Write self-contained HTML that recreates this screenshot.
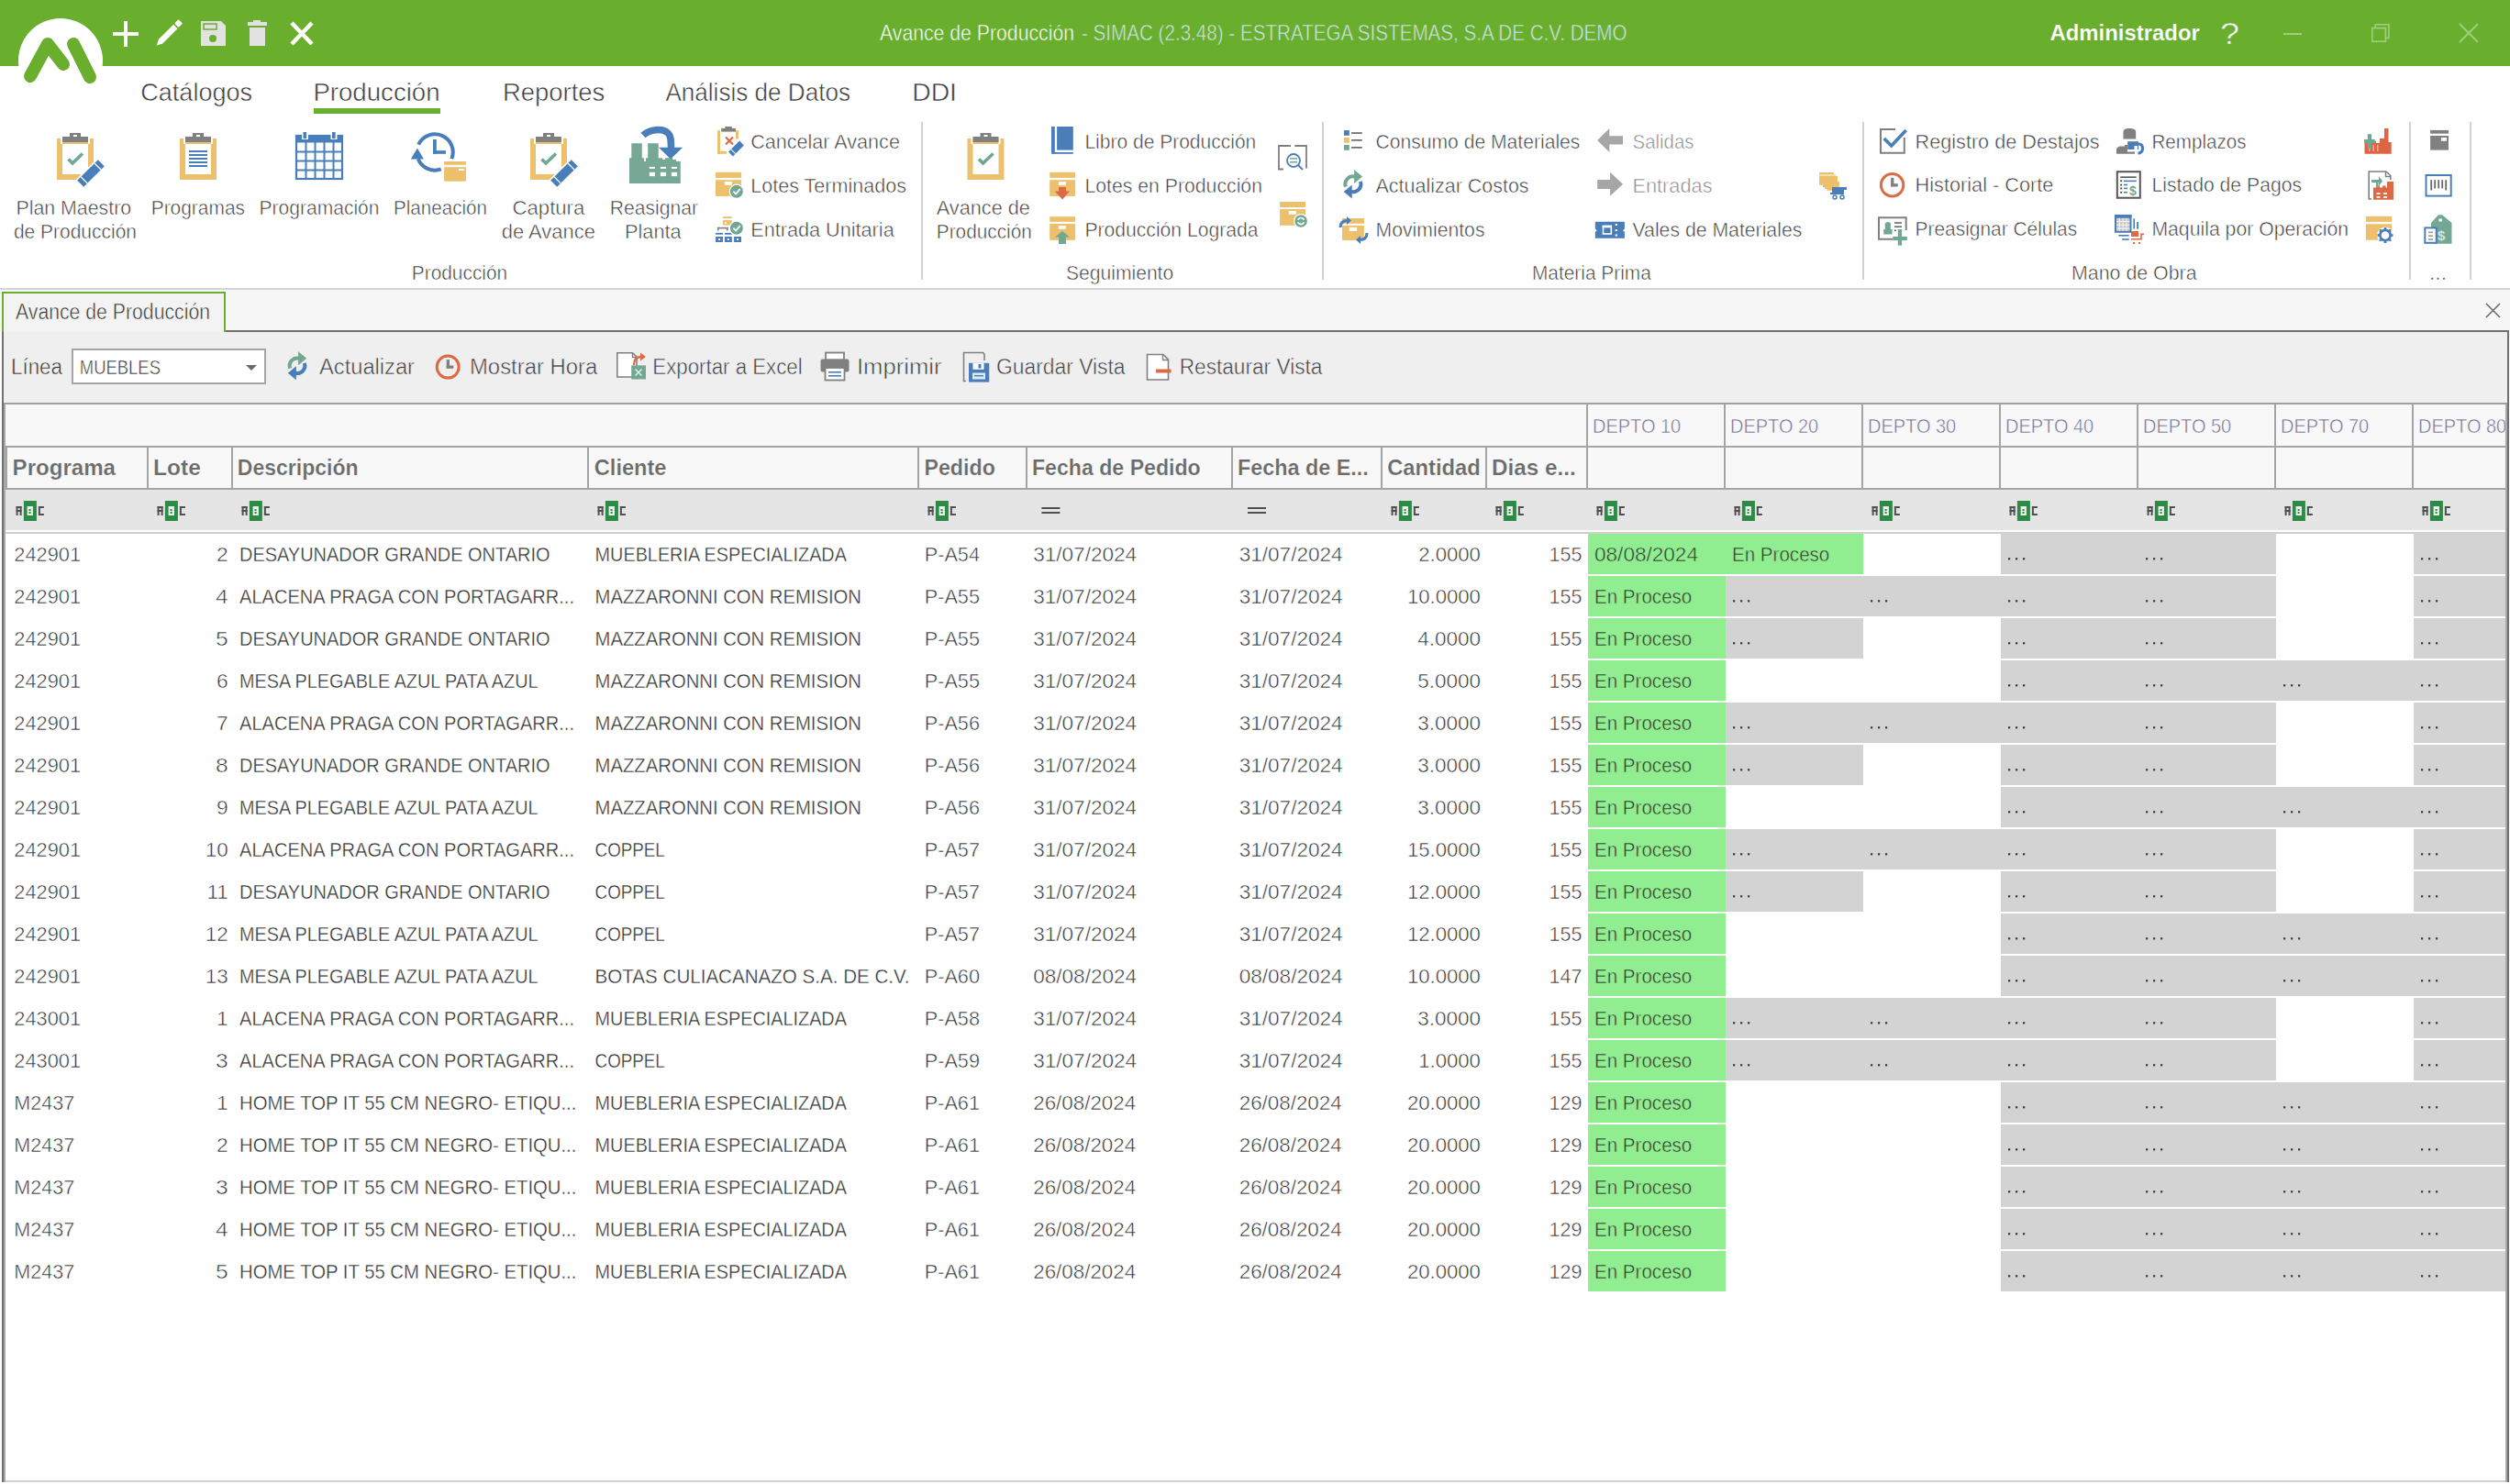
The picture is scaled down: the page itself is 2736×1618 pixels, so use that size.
<!DOCTYPE html>
<html><head><meta charset="utf-8"><title>Avance de Producción</title>
<style>
html,body{margin:0;padding:0;background:#fdfdfd;overflow:hidden}
svg{display:block}
text{font-family:"Liberation Sans",sans-serif;white-space:pre}
</style></head><body>
<svg width="2736" height="1618" viewBox="0 0 2736 1618" shape-rendering="crispEdges">
<rect x="0" y="0" width="2736" height="72" fill="#6aae2e" /><rect x="0" y="72" width="2736" height="242" fill="#ffffff" /><rect x="342" y="118" width="138" height="6" fill="#6aae2e" /><rect x="1004" y="133" width="2" height="172" fill="#d2d2d2" /><rect x="1441" y="133" width="2" height="172" fill="#d2d2d2" /><rect x="2030" y="133" width="2" height="172" fill="#d2d2d2" /><rect x="2626" y="133" width="2" height="172" fill="#d2d2d2" /><rect x="2692" y="133" width="2" height="172" fill="#d2d2d2" /><rect x="0" y="314" width="2736" height="2" fill="#d4d4d4" /><rect x="0" y="316" width="2736" height="46" fill="#f7f7f7" /><rect x="2" y="318" width="244" height="44" fill="#f3f3f3" /><path d="M3,362 V319 H245 V362" fill="none" stroke="#6aae2e" stroke-width="2"/><rect x="246" y="360" width="2489" height="2" fill="#707070" /><rect x="2" y="362" width="2733" height="1254" fill="#fdfdfd" /><rect x="4" y="362" width="2729" height="77" fill="#efefef" /><rect x="2" y="362" width="2" height="1254" fill="#707070" /><rect x="2733" y="362" width="2" height="1254" fill="#707070" /><rect x="79" y="381" width="210" height="37" fill="#fff" stroke="#a5a5a5" stroke-width="2"/><rect x="4" y="439" width="2729" height="2" fill="#a0a0a0" /><rect x="4" y="441" width="2" height="1175" fill="#a8a8a8" /><rect x="2731" y="441" width="2" height="1175" fill="#a8a8a8" /><rect x="6" y="441" width="2725" height="45" fill="#f8f8f8" /><rect x="6" y="486" width="2725" height="2" fill="#a5a5a5" /><rect x="6" y="488" width="2725" height="44" fill="#f8f8f8" /><rect x="6" y="532" width="2725" height="2" fill="#a5a5a5" /><rect x="6" y="534" width="2725" height="44" fill="#e5e5e5" /><rect x="6" y="578" width="2725" height="2" fill="#ffffff" /><rect x="6" y="580" width="2725" height="2" fill="#d0d0d0" /><rect x="6" y="582" width="2725" height="1032" fill="#ffffff" /><rect x="6" y="1614" width="2725" height="2" fill="#d0d0d0" /><rect x="160" y="488" width="2" height="44" fill="#a5a5a5" /><rect x="252" y="488" width="2" height="44" fill="#a5a5a5" /><rect x="640" y="488" width="2" height="44" fill="#a5a5a5" /><rect x="1000" y="488" width="2" height="44" fill="#a5a5a5" /><rect x="1118" y="488" width="2" height="44" fill="#a5a5a5" /><rect x="1342" y="488" width="2" height="44" fill="#a5a5a5" /><rect x="1505" y="488" width="2" height="44" fill="#a5a5a5" /><rect x="1619" y="488" width="2" height="44" fill="#a5a5a5" /><rect x="1729" y="488" width="2" height="44" fill="#a5a5a5" /><rect x="1879" y="488" width="2" height="44" fill="#a5a5a5" /><rect x="2029" y="488" width="2" height="44" fill="#a5a5a5" /><rect x="2179" y="488" width="2" height="44" fill="#a5a5a5" /><rect x="2329" y="488" width="2" height="44" fill="#a5a5a5" /><rect x="2479" y="488" width="2" height="44" fill="#a5a5a5" /><rect x="2629" y="488" width="2" height="44" fill="#a5a5a5" /><rect x="1729" y="441" width="2" height="45" fill="#a5a5a5" /><rect x="1879" y="441" width="2" height="45" fill="#a5a5a5" /><rect x="2029" y="441" width="2" height="45" fill="#a5a5a5" /><rect x="2179" y="441" width="2" height="45" fill="#a5a5a5" /><rect x="2329" y="441" width="2" height="45" fill="#a5a5a5" /><rect x="2479" y="441" width="2" height="45" fill="#a5a5a5" /><rect x="2629" y="441" width="2" height="45" fill="#a5a5a5" /><rect x="6" y="488" width="2" height="44" fill="#a5a5a5" /><rect x="1731" y="582" width="150" height="44" fill="#90ee90" /><rect x="1881" y="582" width="150" height="44" fill="#90ee90" /><rect x="2181" y="582" width="150" height="44" fill="#d3d3d3" /><rect x="2331" y="582" width="150" height="44" fill="#d3d3d3" /><rect x="2631" y="582" width="100" height="44" fill="#d3d3d3" /><rect x="1731" y="628" width="150" height="44" fill="#90ee90" /><rect x="1881" y="628" width="150" height="44" fill="#d3d3d3" /><rect x="2031" y="628" width="150" height="44" fill="#d3d3d3" /><rect x="2181" y="628" width="150" height="44" fill="#d3d3d3" /><rect x="2331" y="628" width="150" height="44" fill="#d3d3d3" /><rect x="2631" y="628" width="100" height="44" fill="#d3d3d3" /><rect x="1731" y="674" width="150" height="44" fill="#90ee90" /><rect x="1881" y="674" width="150" height="44" fill="#d3d3d3" /><rect x="2181" y="674" width="150" height="44" fill="#d3d3d3" /><rect x="2331" y="674" width="150" height="44" fill="#d3d3d3" /><rect x="2631" y="674" width="100" height="44" fill="#d3d3d3" /><rect x="1731" y="720" width="150" height="44" fill="#90ee90" /><rect x="2181" y="720" width="150" height="44" fill="#d3d3d3" /><rect x="2331" y="720" width="150" height="44" fill="#d3d3d3" /><rect x="2481" y="720" width="150" height="44" fill="#d3d3d3" /><rect x="2631" y="720" width="100" height="44" fill="#d3d3d3" /><rect x="1731" y="766" width="150" height="44" fill="#90ee90" /><rect x="1881" y="766" width="150" height="44" fill="#d3d3d3" /><rect x="2031" y="766" width="150" height="44" fill="#d3d3d3" /><rect x="2181" y="766" width="150" height="44" fill="#d3d3d3" /><rect x="2331" y="766" width="150" height="44" fill="#d3d3d3" /><rect x="2631" y="766" width="100" height="44" fill="#d3d3d3" /><rect x="1731" y="812" width="150" height="44" fill="#90ee90" /><rect x="1881" y="812" width="150" height="44" fill="#d3d3d3" /><rect x="2181" y="812" width="150" height="44" fill="#d3d3d3" /><rect x="2331" y="812" width="150" height="44" fill="#d3d3d3" /><rect x="2631" y="812" width="100" height="44" fill="#d3d3d3" /><rect x="1731" y="858" width="150" height="44" fill="#90ee90" /><rect x="2181" y="858" width="150" height="44" fill="#d3d3d3" /><rect x="2331" y="858" width="150" height="44" fill="#d3d3d3" /><rect x="2481" y="858" width="150" height="44" fill="#d3d3d3" /><rect x="2631" y="858" width="100" height="44" fill="#d3d3d3" /><rect x="1731" y="904" width="150" height="44" fill="#90ee90" /><rect x="1881" y="904" width="150" height="44" fill="#d3d3d3" /><rect x="2031" y="904" width="150" height="44" fill="#d3d3d3" /><rect x="2181" y="904" width="150" height="44" fill="#d3d3d3" /><rect x="2331" y="904" width="150" height="44" fill="#d3d3d3" /><rect x="2631" y="904" width="100" height="44" fill="#d3d3d3" /><rect x="1731" y="950" width="150" height="44" fill="#90ee90" /><rect x="1881" y="950" width="150" height="44" fill="#d3d3d3" /><rect x="2181" y="950" width="150" height="44" fill="#d3d3d3" /><rect x="2331" y="950" width="150" height="44" fill="#d3d3d3" /><rect x="2631" y="950" width="100" height="44" fill="#d3d3d3" /><rect x="1731" y="996" width="150" height="44" fill="#90ee90" /><rect x="2181" y="996" width="150" height="44" fill="#d3d3d3" /><rect x="2331" y="996" width="150" height="44" fill="#d3d3d3" /><rect x="2481" y="996" width="150" height="44" fill="#d3d3d3" /><rect x="2631" y="996" width="100" height="44" fill="#d3d3d3" /><rect x="1731" y="1042" width="150" height="44" fill="#90ee90" /><rect x="2181" y="1042" width="150" height="44" fill="#d3d3d3" /><rect x="2331" y="1042" width="150" height="44" fill="#d3d3d3" /><rect x="2481" y="1042" width="150" height="44" fill="#d3d3d3" /><rect x="2631" y="1042" width="100" height="44" fill="#d3d3d3" /><rect x="1731" y="1088" width="150" height="44" fill="#90ee90" /><rect x="1881" y="1088" width="150" height="44" fill="#d3d3d3" /><rect x="2031" y="1088" width="150" height="44" fill="#d3d3d3" /><rect x="2181" y="1088" width="150" height="44" fill="#d3d3d3" /><rect x="2331" y="1088" width="150" height="44" fill="#d3d3d3" /><rect x="2631" y="1088" width="100" height="44" fill="#d3d3d3" /><rect x="1731" y="1134" width="150" height="44" fill="#90ee90" /><rect x="1881" y="1134" width="150" height="44" fill="#d3d3d3" /><rect x="2031" y="1134" width="150" height="44" fill="#d3d3d3" /><rect x="2181" y="1134" width="150" height="44" fill="#d3d3d3" /><rect x="2331" y="1134" width="150" height="44" fill="#d3d3d3" /><rect x="2631" y="1134" width="100" height="44" fill="#d3d3d3" /><rect x="1731" y="1180" width="150" height="44" fill="#90ee90" /><rect x="2181" y="1180" width="150" height="44" fill="#d3d3d3" /><rect x="2331" y="1180" width="150" height="44" fill="#d3d3d3" /><rect x="2481" y="1180" width="150" height="44" fill="#d3d3d3" /><rect x="2631" y="1180" width="100" height="44" fill="#d3d3d3" /><rect x="1731" y="1226" width="150" height="44" fill="#90ee90" /><rect x="2181" y="1226" width="150" height="44" fill="#d3d3d3" /><rect x="2331" y="1226" width="150" height="44" fill="#d3d3d3" /><rect x="2481" y="1226" width="150" height="44" fill="#d3d3d3" /><rect x="2631" y="1226" width="100" height="44" fill="#d3d3d3" /><rect x="1731" y="1272" width="150" height="44" fill="#90ee90" /><rect x="2181" y="1272" width="150" height="44" fill="#d3d3d3" /><rect x="2331" y="1272" width="150" height="44" fill="#d3d3d3" /><rect x="2481" y="1272" width="150" height="44" fill="#d3d3d3" /><rect x="2631" y="1272" width="100" height="44" fill="#d3d3d3" /><rect x="1731" y="1318" width="150" height="44" fill="#90ee90" /><rect x="2181" y="1318" width="150" height="44" fill="#d3d3d3" /><rect x="2331" y="1318" width="150" height="44" fill="#d3d3d3" /><rect x="2481" y="1318" width="150" height="44" fill="#d3d3d3" /><rect x="2631" y="1318" width="100" height="44" fill="#d3d3d3" /><rect x="1731" y="1364" width="150" height="44" fill="#90ee90" /><rect x="2181" y="1364" width="150" height="44" fill="#d3d3d3" /><rect x="2331" y="1364" width="150" height="44" fill="#d3d3d3" /><rect x="2481" y="1364" width="150" height="44" fill="#d3d3d3" /><rect x="2631" y="1364" width="100" height="44" fill="#d3d3d3" />
<g shape-rendering="auto"><circle cx="66" cy="66" r="46" fill="#ffffff"/><polyline points="33,83 52,48 69,70" fill="none" stroke="#6aae2e" stroke-width="14" stroke-linecap="round" stroke-linejoin="round"/><line x1="80" y1="48" x2="98" y2="84" stroke="#6aae2e" stroke-width="14" stroke-linecap="round"/><rect x="123" y="35" width="28" height="4" fill="#fff"/><rect x="135" y="23" width="4" height="28" fill="#fff"/><g transform="translate(170.8,49.4) rotate(-45)"><path d="M0,0 L6,-3.2 H29 V3.2 H6 Z" fill="#fff"/><rect x="30.6" y="-3.2" width="6.2" height="6.4" rx="1" fill="#fff"/></g><path d="M219,23 H241 L246,28 V50 H219 Z" fill="#e2e2e2"/><rect x="222" y="26" width="14" height="6" fill="#e2e2e2" stroke="#6aae2e" stroke-width="1.5"/><circle cx="232" cy="42" r="4" fill="#6aae2e"/><rect x="270" y="24" width="21" height="4" fill="#e2e2e2"/><rect x="276" y="22" width="8" height="2" fill="#e2e2e2"/><rect x="272" y="30" width="17" height="20" fill="#e2e2e2"/><path d="M318,25 L340,48 M340,25 L318,48" stroke="#fff" stroke-width="4.5"/><rect x="2489" y="36" width="20" height="2" fill="#a0cd80"/><rect x="2589.3" y="26.8" width="14.6" height="14.6" fill="none" stroke="#a0cd80" stroke-width="1.6"/><rect x="2585.8" y="30.6" width="14.6" height="14.6" fill="#6aae2e" stroke="#a0cd80" stroke-width="1.6"/><path d="M2681,26 L2701,46 M2701,26 L2681,46" stroke="#a0cd80" stroke-width="1.8"/><path d="M2710,331 L2725,346 M2725,331 L2710,346" stroke="#6a6a6a" stroke-width="1.5"/><path d="M268,398 H280 L274,404 Z" fill="#6a6a6a"/><g><rect x="17.6" y="552" width="2" height="10" fill="#505050"/><rect x="21.6" y="552" width="2" height="10" fill="#505050"/><rect x="17.6" y="552" width="6" height="2" fill="#505050"/><rect x="17.6" y="556" width="6" height="2" fill="#505050"/><rect x="25.900000000000002" y="546" width="14" height="22" fill="#2e8b45"/><rect x="29.6" y="552" width="6.3" height="10" fill="#e8f2ea"/><rect x="31.6" y="555" width="2" height="2" fill="#2e8b45"/><rect x="31.6" y="558" width="2" height="2" fill="#2e8b45"/><rect x="41.900000000000006" y="552" width="2" height="10" fill="#505050"/><rect x="41.900000000000006" y="552" width="6" height="2" fill="#505050"/><rect x="41.900000000000006" y="560" width="6" height="2" fill="#505050"/></g><g><rect x="171.6" y="552" width="2" height="10" fill="#505050"/><rect x="175.6" y="552" width="2" height="10" fill="#505050"/><rect x="171.6" y="552" width="6" height="2" fill="#505050"/><rect x="171.6" y="556" width="6" height="2" fill="#505050"/><rect x="179.9" y="546" width="14" height="22" fill="#2e8b45"/><rect x="183.6" y="552" width="6.3" height="10" fill="#e8f2ea"/><rect x="185.6" y="555" width="2" height="2" fill="#2e8b45"/><rect x="185.6" y="558" width="2" height="2" fill="#2e8b45"/><rect x="195.9" y="552" width="2" height="10" fill="#505050"/><rect x="195.9" y="552" width="6" height="2" fill="#505050"/><rect x="195.9" y="560" width="6" height="2" fill="#505050"/></g><g><rect x="263.6" y="552" width="2" height="10" fill="#505050"/><rect x="267.6" y="552" width="2" height="10" fill="#505050"/><rect x="263.6" y="552" width="6" height="2" fill="#505050"/><rect x="263.6" y="556" width="6" height="2" fill="#505050"/><rect x="271.90000000000003" y="546" width="14" height="22" fill="#2e8b45"/><rect x="275.6" y="552" width="6.3" height="10" fill="#e8f2ea"/><rect x="277.6" y="555" width="2" height="2" fill="#2e8b45"/><rect x="277.6" y="558" width="2" height="2" fill="#2e8b45"/><rect x="287.90000000000003" y="552" width="2" height="10" fill="#505050"/><rect x="287.90000000000003" y="552" width="6" height="2" fill="#505050"/><rect x="287.90000000000003" y="560" width="6" height="2" fill="#505050"/></g><g><rect x="651.6" y="552" width="2" height="10" fill="#505050"/><rect x="655.6" y="552" width="2" height="10" fill="#505050"/><rect x="651.6" y="552" width="6" height="2" fill="#505050"/><rect x="651.6" y="556" width="6" height="2" fill="#505050"/><rect x="659.9" y="546" width="14" height="22" fill="#2e8b45"/><rect x="663.6" y="552" width="6.3" height="10" fill="#e8f2ea"/><rect x="665.6" y="555" width="2" height="2" fill="#2e8b45"/><rect x="665.6" y="558" width="2" height="2" fill="#2e8b45"/><rect x="675.9" y="552" width="2" height="10" fill="#505050"/><rect x="675.9" y="552" width="6" height="2" fill="#505050"/><rect x="675.9" y="560" width="6" height="2" fill="#505050"/></g><g><rect x="1011.6" y="552" width="2" height="10" fill="#505050"/><rect x="1015.6" y="552" width="2" height="10" fill="#505050"/><rect x="1011.6" y="552" width="6" height="2" fill="#505050"/><rect x="1011.6" y="556" width="6" height="2" fill="#505050"/><rect x="1019.9" y="546" width="14" height="22" fill="#2e8b45"/><rect x="1023.6" y="552" width="6.3" height="10" fill="#e8f2ea"/><rect x="1025.6" y="555" width="2" height="2" fill="#2e8b45"/><rect x="1025.6" y="558" width="2" height="2" fill="#2e8b45"/><rect x="1035.9" y="552" width="2" height="10" fill="#505050"/><rect x="1035.9" y="552" width="6" height="2" fill="#505050"/><rect x="1035.9" y="560" width="6" height="2" fill="#505050"/></g><g><rect x="1516.6" y="552" width="2" height="10" fill="#505050"/><rect x="1520.6" y="552" width="2" height="10" fill="#505050"/><rect x="1516.6" y="552" width="6" height="2" fill="#505050"/><rect x="1516.6" y="556" width="6" height="2" fill="#505050"/><rect x="1524.8999999999999" y="546" width="14" height="22" fill="#2e8b45"/><rect x="1528.6" y="552" width="6.3" height="10" fill="#e8f2ea"/><rect x="1530.6" y="555" width="2" height="2" fill="#2e8b45"/><rect x="1530.6" y="558" width="2" height="2" fill="#2e8b45"/><rect x="1540.8999999999999" y="552" width="2" height="10" fill="#505050"/><rect x="1540.8999999999999" y="552" width="6" height="2" fill="#505050"/><rect x="1540.8999999999999" y="560" width="6" height="2" fill="#505050"/></g><g><rect x="1630.6" y="552" width="2" height="10" fill="#505050"/><rect x="1634.6" y="552" width="2" height="10" fill="#505050"/><rect x="1630.6" y="552" width="6" height="2" fill="#505050"/><rect x="1630.6" y="556" width="6" height="2" fill="#505050"/><rect x="1638.8999999999999" y="546" width="14" height="22" fill="#2e8b45"/><rect x="1642.6" y="552" width="6.3" height="10" fill="#e8f2ea"/><rect x="1644.6" y="555" width="2" height="2" fill="#2e8b45"/><rect x="1644.6" y="558" width="2" height="2" fill="#2e8b45"/><rect x="1654.8999999999999" y="552" width="2" height="10" fill="#505050"/><rect x="1654.8999999999999" y="552" width="6" height="2" fill="#505050"/><rect x="1654.8999999999999" y="560" width="6" height="2" fill="#505050"/></g><g><rect x="1740.6" y="552" width="2" height="10" fill="#505050"/><rect x="1744.6" y="552" width="2" height="10" fill="#505050"/><rect x="1740.6" y="552" width="6" height="2" fill="#505050"/><rect x="1740.6" y="556" width="6" height="2" fill="#505050"/><rect x="1748.8999999999999" y="546" width="14" height="22" fill="#2e8b45"/><rect x="1752.6" y="552" width="6.3" height="10" fill="#e8f2ea"/><rect x="1754.6" y="555" width="2" height="2" fill="#2e8b45"/><rect x="1754.6" y="558" width="2" height="2" fill="#2e8b45"/><rect x="1764.8999999999999" y="552" width="2" height="10" fill="#505050"/><rect x="1764.8999999999999" y="552" width="6" height="2" fill="#505050"/><rect x="1764.8999999999999" y="560" width="6" height="2" fill="#505050"/></g><g><rect x="1890.6" y="552" width="2" height="10" fill="#505050"/><rect x="1894.6" y="552" width="2" height="10" fill="#505050"/><rect x="1890.6" y="552" width="6" height="2" fill="#505050"/><rect x="1890.6" y="556" width="6" height="2" fill="#505050"/><rect x="1898.8999999999999" y="546" width="14" height="22" fill="#2e8b45"/><rect x="1902.6" y="552" width="6.3" height="10" fill="#e8f2ea"/><rect x="1904.6" y="555" width="2" height="2" fill="#2e8b45"/><rect x="1904.6" y="558" width="2" height="2" fill="#2e8b45"/><rect x="1914.8999999999999" y="552" width="2" height="10" fill="#505050"/><rect x="1914.8999999999999" y="552" width="6" height="2" fill="#505050"/><rect x="1914.8999999999999" y="560" width="6" height="2" fill="#505050"/></g><g><rect x="2040.6" y="552" width="2" height="10" fill="#505050"/><rect x="2044.6" y="552" width="2" height="10" fill="#505050"/><rect x="2040.6" y="552" width="6" height="2" fill="#505050"/><rect x="2040.6" y="556" width="6" height="2" fill="#505050"/><rect x="2048.9" y="546" width="14" height="22" fill="#2e8b45"/><rect x="2052.6" y="552" width="6.3" height="10" fill="#e8f2ea"/><rect x="2054.6" y="555" width="2" height="2" fill="#2e8b45"/><rect x="2054.6" y="558" width="2" height="2" fill="#2e8b45"/><rect x="2064.9" y="552" width="2" height="10" fill="#505050"/><rect x="2064.9" y="552" width="6" height="2" fill="#505050"/><rect x="2064.9" y="560" width="6" height="2" fill="#505050"/></g><g><rect x="2190.6" y="552" width="2" height="10" fill="#505050"/><rect x="2194.6" y="552" width="2" height="10" fill="#505050"/><rect x="2190.6" y="552" width="6" height="2" fill="#505050"/><rect x="2190.6" y="556" width="6" height="2" fill="#505050"/><rect x="2198.9" y="546" width="14" height="22" fill="#2e8b45"/><rect x="2202.6" y="552" width="6.3" height="10" fill="#e8f2ea"/><rect x="2204.6" y="555" width="2" height="2" fill="#2e8b45"/><rect x="2204.6" y="558" width="2" height="2" fill="#2e8b45"/><rect x="2214.9" y="552" width="2" height="10" fill="#505050"/><rect x="2214.9" y="552" width="6" height="2" fill="#505050"/><rect x="2214.9" y="560" width="6" height="2" fill="#505050"/></g><g><rect x="2340.6" y="552" width="2" height="10" fill="#505050"/><rect x="2344.6" y="552" width="2" height="10" fill="#505050"/><rect x="2340.6" y="552" width="6" height="2" fill="#505050"/><rect x="2340.6" y="556" width="6" height="2" fill="#505050"/><rect x="2348.9" y="546" width="14" height="22" fill="#2e8b45"/><rect x="2352.6" y="552" width="6.3" height="10" fill="#e8f2ea"/><rect x="2354.6" y="555" width="2" height="2" fill="#2e8b45"/><rect x="2354.6" y="558" width="2" height="2" fill="#2e8b45"/><rect x="2364.9" y="552" width="2" height="10" fill="#505050"/><rect x="2364.9" y="552" width="6" height="2" fill="#505050"/><rect x="2364.9" y="560" width="6" height="2" fill="#505050"/></g><g><rect x="2490.6" y="552" width="2" height="10" fill="#505050"/><rect x="2494.6" y="552" width="2" height="10" fill="#505050"/><rect x="2490.6" y="552" width="6" height="2" fill="#505050"/><rect x="2490.6" y="556" width="6" height="2" fill="#505050"/><rect x="2498.9" y="546" width="14" height="22" fill="#2e8b45"/><rect x="2502.6" y="552" width="6.3" height="10" fill="#e8f2ea"/><rect x="2504.6" y="555" width="2" height="2" fill="#2e8b45"/><rect x="2504.6" y="558" width="2" height="2" fill="#2e8b45"/><rect x="2514.9" y="552" width="2" height="10" fill="#505050"/><rect x="2514.9" y="552" width="6" height="2" fill="#505050"/><rect x="2514.9" y="560" width="6" height="2" fill="#505050"/></g><g><rect x="2640.6" y="552" width="2" height="10" fill="#505050"/><rect x="2644.6" y="552" width="2" height="10" fill="#505050"/><rect x="2640.6" y="552" width="6" height="2" fill="#505050"/><rect x="2640.6" y="556" width="6" height="2" fill="#505050"/><rect x="2648.9" y="546" width="14" height="22" fill="#2e8b45"/><rect x="2652.6" y="552" width="6.3" height="10" fill="#e8f2ea"/><rect x="2654.6" y="555" width="2" height="2" fill="#2e8b45"/><rect x="2654.6" y="558" width="2" height="2" fill="#2e8b45"/><rect x="2664.9" y="552" width="2" height="10" fill="#505050"/><rect x="2664.9" y="552" width="6" height="2" fill="#505050"/><rect x="2664.9" y="560" width="6" height="2" fill="#505050"/></g><rect x="1135.4" y="553" width="20" height="2" fill="#505050"/><rect x="1135.4" y="558" width="20" height="2" fill="#505050"/><rect x="1360" y="553" width="20" height="2" fill="#505050"/><rect x="1360" y="558" width="20" height="2" fill="#505050"/><rect x="2189" y="608.2" width="2.2" height="2.2" fill="#3a3a3a"/><rect x="2197" y="608.2" width="2.2" height="2.2" fill="#3a3a3a"/><rect x="2205" y="608.2" width="2.2" height="2.2" fill="#3a3a3a"/><rect x="2339" y="608.2" width="2.2" height="2.2" fill="#3a3a3a"/><rect x="2347" y="608.2" width="2.2" height="2.2" fill="#3a3a3a"/><rect x="2355" y="608.2" width="2.2" height="2.2" fill="#3a3a3a"/><rect x="2639" y="608.2" width="2.2" height="2.2" fill="#3a3a3a"/><rect x="2647" y="608.2" width="2.2" height="2.2" fill="#3a3a3a"/><rect x="2655" y="608.2" width="2.2" height="2.2" fill="#3a3a3a"/><rect x="1889" y="654.2" width="2.2" height="2.2" fill="#3a3a3a"/><rect x="1897" y="654.2" width="2.2" height="2.2" fill="#3a3a3a"/><rect x="1905" y="654.2" width="2.2" height="2.2" fill="#3a3a3a"/><rect x="2039" y="654.2" width="2.2" height="2.2" fill="#3a3a3a"/><rect x="2047" y="654.2" width="2.2" height="2.2" fill="#3a3a3a"/><rect x="2055" y="654.2" width="2.2" height="2.2" fill="#3a3a3a"/><rect x="2189" y="654.2" width="2.2" height="2.2" fill="#3a3a3a"/><rect x="2197" y="654.2" width="2.2" height="2.2" fill="#3a3a3a"/><rect x="2205" y="654.2" width="2.2" height="2.2" fill="#3a3a3a"/><rect x="2339" y="654.2" width="2.2" height="2.2" fill="#3a3a3a"/><rect x="2347" y="654.2" width="2.2" height="2.2" fill="#3a3a3a"/><rect x="2355" y="654.2" width="2.2" height="2.2" fill="#3a3a3a"/><rect x="2639" y="654.2" width="2.2" height="2.2" fill="#3a3a3a"/><rect x="2647" y="654.2" width="2.2" height="2.2" fill="#3a3a3a"/><rect x="2655" y="654.2" width="2.2" height="2.2" fill="#3a3a3a"/><rect x="1889" y="700.2" width="2.2" height="2.2" fill="#3a3a3a"/><rect x="1897" y="700.2" width="2.2" height="2.2" fill="#3a3a3a"/><rect x="1905" y="700.2" width="2.2" height="2.2" fill="#3a3a3a"/><rect x="2189" y="700.2" width="2.2" height="2.2" fill="#3a3a3a"/><rect x="2197" y="700.2" width="2.2" height="2.2" fill="#3a3a3a"/><rect x="2205" y="700.2" width="2.2" height="2.2" fill="#3a3a3a"/><rect x="2339" y="700.2" width="2.2" height="2.2" fill="#3a3a3a"/><rect x="2347" y="700.2" width="2.2" height="2.2" fill="#3a3a3a"/><rect x="2355" y="700.2" width="2.2" height="2.2" fill="#3a3a3a"/><rect x="2639" y="700.2" width="2.2" height="2.2" fill="#3a3a3a"/><rect x="2647" y="700.2" width="2.2" height="2.2" fill="#3a3a3a"/><rect x="2655" y="700.2" width="2.2" height="2.2" fill="#3a3a3a"/><rect x="2189" y="746.2" width="2.2" height="2.2" fill="#3a3a3a"/><rect x="2197" y="746.2" width="2.2" height="2.2" fill="#3a3a3a"/><rect x="2205" y="746.2" width="2.2" height="2.2" fill="#3a3a3a"/><rect x="2339" y="746.2" width="2.2" height="2.2" fill="#3a3a3a"/><rect x="2347" y="746.2" width="2.2" height="2.2" fill="#3a3a3a"/><rect x="2355" y="746.2" width="2.2" height="2.2" fill="#3a3a3a"/><rect x="2489" y="746.2" width="2.2" height="2.2" fill="#3a3a3a"/><rect x="2497" y="746.2" width="2.2" height="2.2" fill="#3a3a3a"/><rect x="2505" y="746.2" width="2.2" height="2.2" fill="#3a3a3a"/><rect x="2639" y="746.2" width="2.2" height="2.2" fill="#3a3a3a"/><rect x="2647" y="746.2" width="2.2" height="2.2" fill="#3a3a3a"/><rect x="2655" y="746.2" width="2.2" height="2.2" fill="#3a3a3a"/><rect x="1889" y="792.2" width="2.2" height="2.2" fill="#3a3a3a"/><rect x="1897" y="792.2" width="2.2" height="2.2" fill="#3a3a3a"/><rect x="1905" y="792.2" width="2.2" height="2.2" fill="#3a3a3a"/><rect x="2039" y="792.2" width="2.2" height="2.2" fill="#3a3a3a"/><rect x="2047" y="792.2" width="2.2" height="2.2" fill="#3a3a3a"/><rect x="2055" y="792.2" width="2.2" height="2.2" fill="#3a3a3a"/><rect x="2189" y="792.2" width="2.2" height="2.2" fill="#3a3a3a"/><rect x="2197" y="792.2" width="2.2" height="2.2" fill="#3a3a3a"/><rect x="2205" y="792.2" width="2.2" height="2.2" fill="#3a3a3a"/><rect x="2339" y="792.2" width="2.2" height="2.2" fill="#3a3a3a"/><rect x="2347" y="792.2" width="2.2" height="2.2" fill="#3a3a3a"/><rect x="2355" y="792.2" width="2.2" height="2.2" fill="#3a3a3a"/><rect x="2639" y="792.2" width="2.2" height="2.2" fill="#3a3a3a"/><rect x="2647" y="792.2" width="2.2" height="2.2" fill="#3a3a3a"/><rect x="2655" y="792.2" width="2.2" height="2.2" fill="#3a3a3a"/><rect x="1889" y="838.2" width="2.2" height="2.2" fill="#3a3a3a"/><rect x="1897" y="838.2" width="2.2" height="2.2" fill="#3a3a3a"/><rect x="1905" y="838.2" width="2.2" height="2.2" fill="#3a3a3a"/><rect x="2189" y="838.2" width="2.2" height="2.2" fill="#3a3a3a"/><rect x="2197" y="838.2" width="2.2" height="2.2" fill="#3a3a3a"/><rect x="2205" y="838.2" width="2.2" height="2.2" fill="#3a3a3a"/><rect x="2339" y="838.2" width="2.2" height="2.2" fill="#3a3a3a"/><rect x="2347" y="838.2" width="2.2" height="2.2" fill="#3a3a3a"/><rect x="2355" y="838.2" width="2.2" height="2.2" fill="#3a3a3a"/><rect x="2639" y="838.2" width="2.2" height="2.2" fill="#3a3a3a"/><rect x="2647" y="838.2" width="2.2" height="2.2" fill="#3a3a3a"/><rect x="2655" y="838.2" width="2.2" height="2.2" fill="#3a3a3a"/><rect x="2189" y="884.2" width="2.2" height="2.2" fill="#3a3a3a"/><rect x="2197" y="884.2" width="2.2" height="2.2" fill="#3a3a3a"/><rect x="2205" y="884.2" width="2.2" height="2.2" fill="#3a3a3a"/><rect x="2339" y="884.2" width="2.2" height="2.2" fill="#3a3a3a"/><rect x="2347" y="884.2" width="2.2" height="2.2" fill="#3a3a3a"/><rect x="2355" y="884.2" width="2.2" height="2.2" fill="#3a3a3a"/><rect x="2489" y="884.2" width="2.2" height="2.2" fill="#3a3a3a"/><rect x="2497" y="884.2" width="2.2" height="2.2" fill="#3a3a3a"/><rect x="2505" y="884.2" width="2.2" height="2.2" fill="#3a3a3a"/><rect x="2639" y="884.2" width="2.2" height="2.2" fill="#3a3a3a"/><rect x="2647" y="884.2" width="2.2" height="2.2" fill="#3a3a3a"/><rect x="2655" y="884.2" width="2.2" height="2.2" fill="#3a3a3a"/><rect x="1889" y="930.2" width="2.2" height="2.2" fill="#3a3a3a"/><rect x="1897" y="930.2" width="2.2" height="2.2" fill="#3a3a3a"/><rect x="1905" y="930.2" width="2.2" height="2.2" fill="#3a3a3a"/><rect x="2039" y="930.2" width="2.2" height="2.2" fill="#3a3a3a"/><rect x="2047" y="930.2" width="2.2" height="2.2" fill="#3a3a3a"/><rect x="2055" y="930.2" width="2.2" height="2.2" fill="#3a3a3a"/><rect x="2189" y="930.2" width="2.2" height="2.2" fill="#3a3a3a"/><rect x="2197" y="930.2" width="2.2" height="2.2" fill="#3a3a3a"/><rect x="2205" y="930.2" width="2.2" height="2.2" fill="#3a3a3a"/><rect x="2339" y="930.2" width="2.2" height="2.2" fill="#3a3a3a"/><rect x="2347" y="930.2" width="2.2" height="2.2" fill="#3a3a3a"/><rect x="2355" y="930.2" width="2.2" height="2.2" fill="#3a3a3a"/><rect x="2639" y="930.2" width="2.2" height="2.2" fill="#3a3a3a"/><rect x="2647" y="930.2" width="2.2" height="2.2" fill="#3a3a3a"/><rect x="2655" y="930.2" width="2.2" height="2.2" fill="#3a3a3a"/><rect x="1889" y="976.2" width="2.2" height="2.2" fill="#3a3a3a"/><rect x="1897" y="976.2" width="2.2" height="2.2" fill="#3a3a3a"/><rect x="1905" y="976.2" width="2.2" height="2.2" fill="#3a3a3a"/><rect x="2189" y="976.2" width="2.2" height="2.2" fill="#3a3a3a"/><rect x="2197" y="976.2" width="2.2" height="2.2" fill="#3a3a3a"/><rect x="2205" y="976.2" width="2.2" height="2.2" fill="#3a3a3a"/><rect x="2339" y="976.2" width="2.2" height="2.2" fill="#3a3a3a"/><rect x="2347" y="976.2" width="2.2" height="2.2" fill="#3a3a3a"/><rect x="2355" y="976.2" width="2.2" height="2.2" fill="#3a3a3a"/><rect x="2639" y="976.2" width="2.2" height="2.2" fill="#3a3a3a"/><rect x="2647" y="976.2" width="2.2" height="2.2" fill="#3a3a3a"/><rect x="2655" y="976.2" width="2.2" height="2.2" fill="#3a3a3a"/><rect x="2189" y="1022.2" width="2.2" height="2.2" fill="#3a3a3a"/><rect x="2197" y="1022.2" width="2.2" height="2.2" fill="#3a3a3a"/><rect x="2205" y="1022.2" width="2.2" height="2.2" fill="#3a3a3a"/><rect x="2339" y="1022.2" width="2.2" height="2.2" fill="#3a3a3a"/><rect x="2347" y="1022.2" width="2.2" height="2.2" fill="#3a3a3a"/><rect x="2355" y="1022.2" width="2.2" height="2.2" fill="#3a3a3a"/><rect x="2489" y="1022.2" width="2.2" height="2.2" fill="#3a3a3a"/><rect x="2497" y="1022.2" width="2.2" height="2.2" fill="#3a3a3a"/><rect x="2505" y="1022.2" width="2.2" height="2.2" fill="#3a3a3a"/><rect x="2639" y="1022.2" width="2.2" height="2.2" fill="#3a3a3a"/><rect x="2647" y="1022.2" width="2.2" height="2.2" fill="#3a3a3a"/><rect x="2655" y="1022.2" width="2.2" height="2.2" fill="#3a3a3a"/><rect x="2189" y="1068.2" width="2.2" height="2.2" fill="#3a3a3a"/><rect x="2197" y="1068.2" width="2.2" height="2.2" fill="#3a3a3a"/><rect x="2205" y="1068.2" width="2.2" height="2.2" fill="#3a3a3a"/><rect x="2339" y="1068.2" width="2.2" height="2.2" fill="#3a3a3a"/><rect x="2347" y="1068.2" width="2.2" height="2.2" fill="#3a3a3a"/><rect x="2355" y="1068.2" width="2.2" height="2.2" fill="#3a3a3a"/><rect x="2489" y="1068.2" width="2.2" height="2.2" fill="#3a3a3a"/><rect x="2497" y="1068.2" width="2.2" height="2.2" fill="#3a3a3a"/><rect x="2505" y="1068.2" width="2.2" height="2.2" fill="#3a3a3a"/><rect x="2639" y="1068.2" width="2.2" height="2.2" fill="#3a3a3a"/><rect x="2647" y="1068.2" width="2.2" height="2.2" fill="#3a3a3a"/><rect x="2655" y="1068.2" width="2.2" height="2.2" fill="#3a3a3a"/><rect x="1889" y="1114.2" width="2.2" height="2.2" fill="#3a3a3a"/><rect x="1897" y="1114.2" width="2.2" height="2.2" fill="#3a3a3a"/><rect x="1905" y="1114.2" width="2.2" height="2.2" fill="#3a3a3a"/><rect x="2039" y="1114.2" width="2.2" height="2.2" fill="#3a3a3a"/><rect x="2047" y="1114.2" width="2.2" height="2.2" fill="#3a3a3a"/><rect x="2055" y="1114.2" width="2.2" height="2.2" fill="#3a3a3a"/><rect x="2189" y="1114.2" width="2.2" height="2.2" fill="#3a3a3a"/><rect x="2197" y="1114.2" width="2.2" height="2.2" fill="#3a3a3a"/><rect x="2205" y="1114.2" width="2.2" height="2.2" fill="#3a3a3a"/><rect x="2339" y="1114.2" width="2.2" height="2.2" fill="#3a3a3a"/><rect x="2347" y="1114.2" width="2.2" height="2.2" fill="#3a3a3a"/><rect x="2355" y="1114.2" width="2.2" height="2.2" fill="#3a3a3a"/><rect x="2639" y="1114.2" width="2.2" height="2.2" fill="#3a3a3a"/><rect x="2647" y="1114.2" width="2.2" height="2.2" fill="#3a3a3a"/><rect x="2655" y="1114.2" width="2.2" height="2.2" fill="#3a3a3a"/><rect x="1889" y="1160.2" width="2.2" height="2.2" fill="#3a3a3a"/><rect x="1897" y="1160.2" width="2.2" height="2.2" fill="#3a3a3a"/><rect x="1905" y="1160.2" width="2.2" height="2.2" fill="#3a3a3a"/><rect x="2039" y="1160.2" width="2.2" height="2.2" fill="#3a3a3a"/><rect x="2047" y="1160.2" width="2.2" height="2.2" fill="#3a3a3a"/><rect x="2055" y="1160.2" width="2.2" height="2.2" fill="#3a3a3a"/><rect x="2189" y="1160.2" width="2.2" height="2.2" fill="#3a3a3a"/><rect x="2197" y="1160.2" width="2.2" height="2.2" fill="#3a3a3a"/><rect x="2205" y="1160.2" width="2.2" height="2.2" fill="#3a3a3a"/><rect x="2339" y="1160.2" width="2.2" height="2.2" fill="#3a3a3a"/><rect x="2347" y="1160.2" width="2.2" height="2.2" fill="#3a3a3a"/><rect x="2355" y="1160.2" width="2.2" height="2.2" fill="#3a3a3a"/><rect x="2639" y="1160.2" width="2.2" height="2.2" fill="#3a3a3a"/><rect x="2647" y="1160.2" width="2.2" height="2.2" fill="#3a3a3a"/><rect x="2655" y="1160.2" width="2.2" height="2.2" fill="#3a3a3a"/><rect x="2189" y="1206.2" width="2.2" height="2.2" fill="#3a3a3a"/><rect x="2197" y="1206.2" width="2.2" height="2.2" fill="#3a3a3a"/><rect x="2205" y="1206.2" width="2.2" height="2.2" fill="#3a3a3a"/><rect x="2339" y="1206.2" width="2.2" height="2.2" fill="#3a3a3a"/><rect x="2347" y="1206.2" width="2.2" height="2.2" fill="#3a3a3a"/><rect x="2355" y="1206.2" width="2.2" height="2.2" fill="#3a3a3a"/><rect x="2489" y="1206.2" width="2.2" height="2.2" fill="#3a3a3a"/><rect x="2497" y="1206.2" width="2.2" height="2.2" fill="#3a3a3a"/><rect x="2505" y="1206.2" width="2.2" height="2.2" fill="#3a3a3a"/><rect x="2639" y="1206.2" width="2.2" height="2.2" fill="#3a3a3a"/><rect x="2647" y="1206.2" width="2.2" height="2.2" fill="#3a3a3a"/><rect x="2655" y="1206.2" width="2.2" height="2.2" fill="#3a3a3a"/><rect x="2189" y="1252.2" width="2.2" height="2.2" fill="#3a3a3a"/><rect x="2197" y="1252.2" width="2.2" height="2.2" fill="#3a3a3a"/><rect x="2205" y="1252.2" width="2.2" height="2.2" fill="#3a3a3a"/><rect x="2339" y="1252.2" width="2.2" height="2.2" fill="#3a3a3a"/><rect x="2347" y="1252.2" width="2.2" height="2.2" fill="#3a3a3a"/><rect x="2355" y="1252.2" width="2.2" height="2.2" fill="#3a3a3a"/><rect x="2489" y="1252.2" width="2.2" height="2.2" fill="#3a3a3a"/><rect x="2497" y="1252.2" width="2.2" height="2.2" fill="#3a3a3a"/><rect x="2505" y="1252.2" width="2.2" height="2.2" fill="#3a3a3a"/><rect x="2639" y="1252.2" width="2.2" height="2.2" fill="#3a3a3a"/><rect x="2647" y="1252.2" width="2.2" height="2.2" fill="#3a3a3a"/><rect x="2655" y="1252.2" width="2.2" height="2.2" fill="#3a3a3a"/><rect x="2189" y="1298.2" width="2.2" height="2.2" fill="#3a3a3a"/><rect x="2197" y="1298.2" width="2.2" height="2.2" fill="#3a3a3a"/><rect x="2205" y="1298.2" width="2.2" height="2.2" fill="#3a3a3a"/><rect x="2339" y="1298.2" width="2.2" height="2.2" fill="#3a3a3a"/><rect x="2347" y="1298.2" width="2.2" height="2.2" fill="#3a3a3a"/><rect x="2355" y="1298.2" width="2.2" height="2.2" fill="#3a3a3a"/><rect x="2489" y="1298.2" width="2.2" height="2.2" fill="#3a3a3a"/><rect x="2497" y="1298.2" width="2.2" height="2.2" fill="#3a3a3a"/><rect x="2505" y="1298.2" width="2.2" height="2.2" fill="#3a3a3a"/><rect x="2639" y="1298.2" width="2.2" height="2.2" fill="#3a3a3a"/><rect x="2647" y="1298.2" width="2.2" height="2.2" fill="#3a3a3a"/><rect x="2655" y="1298.2" width="2.2" height="2.2" fill="#3a3a3a"/><rect x="2189" y="1344.2" width="2.2" height="2.2" fill="#3a3a3a"/><rect x="2197" y="1344.2" width="2.2" height="2.2" fill="#3a3a3a"/><rect x="2205" y="1344.2" width="2.2" height="2.2" fill="#3a3a3a"/><rect x="2339" y="1344.2" width="2.2" height="2.2" fill="#3a3a3a"/><rect x="2347" y="1344.2" width="2.2" height="2.2" fill="#3a3a3a"/><rect x="2355" y="1344.2" width="2.2" height="2.2" fill="#3a3a3a"/><rect x="2489" y="1344.2" width="2.2" height="2.2" fill="#3a3a3a"/><rect x="2497" y="1344.2" width="2.2" height="2.2" fill="#3a3a3a"/><rect x="2505" y="1344.2" width="2.2" height="2.2" fill="#3a3a3a"/><rect x="2639" y="1344.2" width="2.2" height="2.2" fill="#3a3a3a"/><rect x="2647" y="1344.2" width="2.2" height="2.2" fill="#3a3a3a"/><rect x="2655" y="1344.2" width="2.2" height="2.2" fill="#3a3a3a"/><rect x="2189" y="1390.2" width="2.2" height="2.2" fill="#3a3a3a"/><rect x="2197" y="1390.2" width="2.2" height="2.2" fill="#3a3a3a"/><rect x="2205" y="1390.2" width="2.2" height="2.2" fill="#3a3a3a"/><rect x="2339" y="1390.2" width="2.2" height="2.2" fill="#3a3a3a"/><rect x="2347" y="1390.2" width="2.2" height="2.2" fill="#3a3a3a"/><rect x="2355" y="1390.2" width="2.2" height="2.2" fill="#3a3a3a"/><rect x="2489" y="1390.2" width="2.2" height="2.2" fill="#3a3a3a"/><rect x="2497" y="1390.2" width="2.2" height="2.2" fill="#3a3a3a"/><rect x="2505" y="1390.2" width="2.2" height="2.2" fill="#3a3a3a"/><rect x="2639" y="1390.2" width="2.2" height="2.2" fill="#3a3a3a"/><rect x="2647" y="1390.2" width="2.2" height="2.2" fill="#3a3a3a"/><rect x="2655" y="1390.2" width="2.2" height="2.2" fill="#3a3a3a"/><rect x="62.00" y="151.00" width="40.00" height="45.00" fill="#ecc06c"/><rect x="68.00" y="157.00" width="28.00" height="33.00" fill="#ffffff"/><rect x="66.00" y="151.00" width="2.00" height="6.00" fill="#ffffff"/><rect x="96.00" y="151.00" width="2.00" height="6.00" fill="#ffffff"/><rect x="68.00" y="149.00" width="28.00" height="6.00" fill="#808080"/><rect x="76.00" y="145.00" width="12.00" height="5.00" fill="#808080"/><rect x="80.00" y="147.00" width="4.00" height="2.00" fill="#ffffff"/><polyline points="74.50,173.50 79.00,178.00 90.00,167.50" fill="none" stroke="#72a893" stroke-width="3.60"/><g transform="translate(99.00,189.00) rotate(-45)"><rect x="-17.50" y="-6.60" width="35.00" height="13.20" fill="#ffffff"/><rect x="-16.00" y="-5.00" width="32.00" height="10.00" fill="#4a7ebb"/><rect x="-11.00" y="-5.00" width="1.30" height="10.00" fill="#ffffff"/><rect x="10.00" y="-5.00" width="1.30" height="10.00" fill="#ffffff"/></g><rect x="196.00" y="151.00" width="40.00" height="45.00" fill="#ecc06c"/><rect x="202.00" y="157.00" width="28.00" height="33.00" fill="#ffffff"/><rect x="200.00" y="151.00" width="2.00" height="6.00" fill="#ffffff"/><rect x="230.00" y="151.00" width="2.00" height="6.00" fill="#ffffff"/><rect x="202.00" y="149.00" width="28.00" height="6.00" fill="#808080"/><rect x="210.00" y="145.00" width="12.00" height="5.00" fill="#808080"/><rect x="214.00" y="147.00" width="4.00" height="2.00" fill="#ffffff"/><rect x="206.00" y="164.00" width="20.00" height="2.00" fill="#4a7ebb"/><rect x="206.00" y="168.00" width="20.00" height="2.00" fill="#4a7ebb"/><rect x="206.00" y="172.00" width="20.00" height="2.00" fill="#4a7ebb"/><rect x="206.00" y="176.00" width="20.00" height="2.00" fill="#4a7ebb"/><rect x="206.00" y="180.00" width="20.00" height="2.00" fill="#4a7ebb"/><rect x="323" y="148" width="50" height="47" fill="none" stroke="#4a7ebb" stroke-width="2.2"/><rect x="322" y="147.5" width="52" height="8" fill="#4a7ebb"/><rect x="329.0" y="143" width="7" height="9" fill="#ffffff"/><rect x="330.5" y="144" width="3.6" height="7" fill="#4a7ebb"/><rect x="360.5" y="143" width="7" height="9" fill="#ffffff"/><rect x="362" y="144" width="3.6" height="7" fill="#4a7ebb"/><rect x="332.5" y="155" width="2" height="40" fill="#4a7ebb"/><rect x="342.5" y="155" width="2" height="40" fill="#4a7ebb"/><rect x="352.5" y="155" width="2" height="40" fill="#4a7ebb"/><rect x="362.5" y="155" width="2" height="40" fill="#4a7ebb"/><rect x="323" y="164.5" width="50" height="2" fill="#4a7ebb"/><rect x="323" y="174.5" width="50" height="2" fill="#4a7ebb"/><rect x="323" y="184.5" width="50" height="2" fill="#4a7ebb"/><path d="M456.15,157.57 A19.7,19.7 0 0 1 492.33,173.12" fill="none" stroke="#4a7ebb" stroke-width="4"/><path d="M480.74,184.41 A19.7,19.7 0 0 1 455.73,173.28" fill="none" stroke="#4a7ebb" stroke-width="4"/><path d="M454.9,161.5 L447.8,173.6 L461.9,173.6 Z" fill="#4a7ebb"/><rect x="472" y="152" width="3.8" height="15.8" fill="#4a7ebb"/><rect x="472" y="164.2" width="14" height="3.6" fill="#4a7ebb"/><rect x="484.1" y="176" width="23.8" height="3.8" fill="#ecc06c"/><rect x="484.1" y="182.20000000000002" width="23.8" height="15.5" fill="#ecc06c"/><rect x="499.90000000000003" y="184.00000000000003" width="5.9" height="2" fill="#ffffff"/><rect x="578.00" y="151.00" width="40.00" height="45.00" fill="#ecc06c"/><rect x="584.00" y="157.00" width="28.00" height="33.00" fill="#ffffff"/><rect x="582.00" y="151.00" width="2.00" height="6.00" fill="#ffffff"/><rect x="612.00" y="151.00" width="2.00" height="6.00" fill="#ffffff"/><rect x="584.00" y="149.00" width="28.00" height="6.00" fill="#808080"/><rect x="592.00" y="145.00" width="12.00" height="5.00" fill="#808080"/><rect x="596.00" y="147.00" width="4.00" height="2.00" fill="#ffffff"/><polyline points="590.50,173.50 595.00,178.00 606.00,167.50" fill="none" stroke="#72a893" stroke-width="3.60"/><g transform="translate(615.00,189.00) rotate(-45)"><rect x="-17.50" y="-6.60" width="35.00" height="13.20" fill="#ffffff"/><rect x="-16.00" y="-5.00" width="32.00" height="10.00" fill="#4a7ebb"/><rect x="-11.00" y="-5.00" width="1.30" height="10.00" fill="#ffffff"/><rect x="10.00" y="-5.00" width="1.30" height="10.00" fill="#ffffff"/></g><path d="M686,200 V172.3 H688.3 V156.2 H699.8 V172.3 H702 V176 H704 V172.3 H706.2 V156.2 H717.7 V172.3 H722 V174 H725 V172.3 H733 V174 H737 V176 H741.8 V200 Z" fill="#77a896"/><rect x="707.8" y="181.9" width="6.2" height="2.1" fill="#fff"/><rect x="707.8" y="187.8" width="6.2" height="4.3" fill="#fff"/><rect x="719.9" y="181.9" width="6.2" height="2.1" fill="#fff"/><rect x="719.9" y="187.8" width="6.2" height="4.3" fill="#fff"/><rect x="731.9" y="181.9" width="6.2" height="2.1" fill="#fff"/><rect x="731.9" y="187.8" width="6.2" height="4.3" fill="#fff"/><path d="M701,147.5 C708,141 722,139.5 728,145 C731.5,148 731.5,154 731.5,161" fill="none" stroke="#4a7ebb" stroke-width="7.5"/><path d="M718,160.7 H744.2 L731,173.4 Z" fill="#4a7ebb"/><rect x="782" y="142.2" width="3" height="25.6" fill="#ecc06c"/><rect x="782" y="164.8" width="10" height="3" fill="#ecc06c"/><rect x="802" y="142.2" width="3" height="9.3" fill="#ecc06c"/><rect x="786.2" y="139.9" width="15.8" height="3.7" fill="#808080"/><rect x="790.3" y="138" width="7.5" height="2" fill="#808080"/><path d="M791,149.5 L799,157.5 M799,149.5 L791,157.5" stroke="#dc6a45" stroke-width="2.2"/><g transform="translate(802.5,162) rotate(-45)"><rect x="-9.5" y="-4.6" width="19" height="9.2" fill="#fff"/><rect x="-8.5" y="-3.4" width="17" height="6.8" fill="#4a7ebb"/><rect x="-5" y="-3.4" width="1" height="6.8" fill="#fff"/></g><rect x="780" y="187.8" width="28" height="6.1" fill="#ecc06c"/><rect x="780" y="196.20000000000002" width="28" height="17.7" fill="#ecc06c"/><rect x="789.9" y="198.00000000000003" width="7.9" height="3.8" fill="#ffffff"/><circle cx="802.9" cy="208.7" r="8.2" fill="#ffffff"/><circle cx="802.9" cy="208.7" r="7" fill="#72a893"/><polyline points="799.4,208.7 802.1,211.5 806.6999999999999,206.2" fill="none" stroke="#ffffff" stroke-width="1.8"/><rect x="788" y="236.2" width="9.8" height="1.8" fill="#ecc06c"/><rect x="788" y="240" width="9.8" height="5.5" fill="#ecc06c"/><rect x="790" y="242" width="2" height="2" fill="#fff"/><rect x="782" y="247.8" width="11.6" height="1.6" fill="#808080"/><rect x="782" y="247.8" width="1.6" height="3.7" fill="#808080"/><rect x="792" y="247.8" width="1.6" height="3.7" fill="#808080"/><rect x="780.1" y="258" width="7.9" height="6" fill="#4a7ebb"/><rect x="783.0" y="260" width="2" height="2" fill="#fff"/><rect x="789.9" y="258" width="7.9" height="6" fill="#4a7ebb"/><rect x="792.8" y="260" width="2" height="2" fill="#fff"/><rect x="800.1" y="258" width="7.9" height="6" fill="#4a7ebb"/><rect x="803.0" y="260" width="2" height="2" fill="#fff"/><rect x="780.1" y="253.9" width="7.9" height="1.8" fill="#4a7ebb"/><rect x="789.9" y="253.9" width="7.9" height="1.8" fill="#4a7ebb"/><circle cx="802.9" cy="248.7" r="8.2" fill="#ffffff"/><circle cx="802.9" cy="248.7" r="7" fill="#72a893"/><polyline points="799.4,248.7 802.1,251.5 806.6999999999999,246.2" fill="none" stroke="#ffffff" stroke-width="1.8"/><rect x="1054.50" y="151.00" width="40.00" height="45.00" fill="#ecc06c"/><rect x="1060.50" y="157.00" width="28.00" height="33.00" fill="#ffffff"/><rect x="1058.50" y="151.00" width="2.00" height="6.00" fill="#ffffff"/><rect x="1088.50" y="151.00" width="2.00" height="6.00" fill="#ffffff"/><rect x="1060.50" y="149.00" width="28.00" height="6.00" fill="#808080"/><rect x="1068.50" y="145.00" width="12.00" height="5.00" fill="#808080"/><rect x="1072.50" y="147.00" width="4.00" height="2.00" fill="#ffffff"/><polyline points="1067.00,173.50 1071.50,178.00 1082.50,167.50" fill="none" stroke="#72a893" stroke-width="3.60"/><rect x="1146" y="138" width="3.8" height="29.8" fill="#4a7ebb"/><rect x="1152.1" y="138" width="17.7" height="25.6" fill="#4a7ebb"/><rect x="1147.9" y="166" width="21.9" height="1.8" fill="#4a7ebb"/><rect x="1144.2" y="187.8" width="27.9" height="6.1" fill="#ecc06c"/><rect x="1144.2" y="196.20000000000002" width="27.9" height="17.7" fill="#ecc06c"/><rect x="1154.0" y="198.00000000000003" width="7.9" height="3.8" fill="#ffffff"/><path d="M1154,204 H1161.9 V208.5 H1166 L1158,217.5 L1149.8,208.5 H1154 Z" fill="#dc6a45"/><rect x="1144.2" y="236.2" width="27.9" height="5.6" fill="#ecc06c"/><rect x="1144.2" y="243.99999999999997" width="27.9" height="17.8" fill="#ecc06c"/><rect x="1154.0" y="245.99999999999997" width="7.9" height="3.7" fill="#ffffff"/><path d="M1158,252 L1166,258.5 H1161.9 V266 H1154 V258.5 H1149.8 Z" fill="#72a893"/><path d="M1407,159 H1394 V184.5 H1399 M1411.3,159 H1424 V183.5" fill="none" stroke="#808080" stroke-width="1.8"/><circle cx="1410" cy="175" r="7" fill="#fff" stroke="#4a7ebb" stroke-width="1.8"/><rect x="1406" y="172.2" width="8" height="1.5" fill="#72a893"/><rect x="1406" y="176" width="8" height="1.5" fill="#72a893"/><path d="M1415,180 L1420,185" stroke="#4a7ebb" stroke-width="2"/><rect x="1395.1" y="220" width="27.9" height="6" fill="#ecc06c"/><rect x="1395.1" y="228" width="27.9" height="17.8" fill="#ecc06c"/><rect x="1404.8" y="230" width="8.1" height="3.7" fill="#ffffff"/><circle cx="1418.1" cy="241" r="8" fill="#fff"/><circle cx="1418.1" cy="241" r="6.8" fill="#72a893"/><path d="M1414.81,239.80 A3.5,3.5 0 0 1 1421.39,239.80" stroke="#fff" stroke-width="1.5" fill="none"/><path d="M1421.39,242.20 A3.5,3.5 0 0 1 1414.81,242.20" stroke="#fff" stroke-width="1.5" fill="none"/><rect x="1465" y="142" width="5.8" height="5.8" fill="#4a7ebb"/><rect x="1465" y="150" width="5.8" height="5.8" fill="#ecc06c"/><rect x="1465" y="158" width="5.8" height="5.8" fill="#72a893"/><rect x="1473.1" y="144.2" width="11.7" height="1.7" fill="#6a6a6a"/><rect x="1473.1" y="152" width="11.7" height="1.7" fill="#6a6a6a"/><rect x="1473.1" y="160" width="11.7" height="1.7" fill="#6a6a6a"/><path d="M1466.91,203.66 A8.5,8.5 0 0 1 1477.10,192.54" fill="none" stroke="#72a893" stroke-width="4"/><path d="M1476.0999618833714,185.03963047654292 L1485.0999618833714,192.53963047654292 L1476.0999618833714,200.03963047654292 Z" fill="#72a893"/><path d="M1482.89,197.84 A8.5,8.5 0 0 1 1472.70,208.96" fill="none" stroke="#4a7ebb" stroke-width="4"/><path d="M1473.7000381166288,201.46036952345708 L1464.7000381166288,208.96036952345708 L1473.7000381166288,216.46036952345708 Z" fill="#4a7ebb"/><rect x="1463" y="238" width="23.9" height="5.8" fill="#ecc06c"/><rect x="1463" y="245.8" width="23.9" height="16.2" fill="#ecc06c"/><rect x="1470.7" y="247.8" width="8.5" height="4.1" fill="#ffffff"/><path d="M1461,248 C1461,243 1464,240.5 1469,240.5" fill="none" stroke="#4a7ebb" stroke-width="3"/><path d="M1468,236 L1473,240.5 L1468,245 Z" fill="#4a7ebb"/><path d="M1490,254 C1490,259 1487,261.5 1482,261.5" fill="none" stroke="#4a7ebb" stroke-width="3"/><path d="M1483,257 L1478,261.5 L1483,266 Z" fill="#4a7ebb"/><path d="M1741.2,152.9 L1754.3,139.9 V148.3 H1769 V157.6 H1754.3 V165.9 Z" fill="#a6a6a6"/><path d="M1741.2,196.1 H1755.1 V187.8 L1769,200.8 L1755.1,213.8 V205.9 H1741.2 Z" fill="#a6a6a6"/><path d="M1738.8,241.7 H1770.9 V249.6 L1768.9,251.2 L1770.9,252.8 V259.8 H1738.8 V252.8 L1740.8,251.2 L1738.8,249.6 Z" fill="#4a7ebb"/><rect x="1747.5" y="246.5" width="8.8" height="8.5" fill="none" stroke="#fff" stroke-width="1.6"/><rect x="1746.7" y="245.8" width="10.3" height="2.5" fill="#fff"/><rect x="1753" y="251" width="1.8" height="1.8" fill="#4a7ebb"/><rect x="1760.7" y="244" width="2.3" height="2" fill="#fff"/><rect x="1760.7" y="250" width="2.3" height="2" fill="#fff"/><rect x="1760.7" y="255.5" width="2.3" height="2" fill="#fff"/><path d="M1983,188 H1999 V190 H2001 V192 H2003 V198 H2005 V202 H2004.8 V207.7 H1991.5 V206 H1989 V204 H1987 V201.8 H1983 Z" fill="#ecc06c"/><rect x="1983" y="190" width="18" height="2" fill="#f5dcaa"/><rect x="1997" y="204" width="13" height="8" fill="#4a7ebb"/><rect x="1995" y="210" width="15" height="2" fill="#4a7ebb"/><rect x="2008.5" y="204" width="4.4" height="3" fill="#4a7ebb"/><circle cx="2000" cy="215" r="2" fill="none" stroke="#4a7ebb" stroke-width="1.5"/><circle cx="2008" cy="215" r="2" fill="none" stroke="#4a7ebb" stroke-width="1.5"/><path d="M2066,141 H2050 V166.8 H2075.8 V150" fill="none" stroke="#808080" stroke-width="2"/><polyline points="2053.7,150.9 2061.7,158.9 2077.7,142" fill="none" stroke="#4a7ebb" stroke-width="3.6"/><circle cx="2062.6" cy="201.8" r="12.2" fill="#ffffff" stroke="#dc6a45" stroke-width="3"/><rect x="2061.1" y="193.8" width="3.3" height="9.5" fill="#808080"/><rect x="2061.1" y="200.20000000000002" width="7.6" height="3.3" fill="#808080"/><path d="M2063,260.7 H2048 V237.2 H2077.7 V251" fill="none" stroke="#808080" stroke-width="2"/><circle cx="2057.8" cy="244.5" r="2.6" fill="#72a893"/><rect x="2054.8" y="243" width="6" height="7" fill="#72a893"/><rect x="2053.2" y="250" width="9.4" height="5.5" fill="#72a893"/><rect x="2065" y="242.2" width="8" height="1.6" fill="#6a6a6a"/><rect x="2065" y="246.4" width="8" height="1.6" fill="#6a6a6a"/><rect x="2065" y="250.5" width="2" height="1.6" fill="#6a6a6a"/><rect x="2062.5" y="250" width="16.5" height="17" fill="#fff" opacity="0"/><rect x="2063.2" y="257.9" width="15.6" height="4.2" fill="#72a893"/><rect x="2068.8" y="250" width="4.3" height="17.6" fill="#72a893"/><path d="M2314.5,151.5 V144 C2314.5,141 2316.5,140 2321,140 C2325.5,140 2328.2,141 2328.2,144 V151.5 Z" fill="#808080"/><path d="M2307,167.8 V162 L2310,159.5 H2316 V158 H2319 V165.5 H2327 V167.8 Z" fill="#808080"/><path d="M2319.2,154.2 H2331 V163 H2319.2 Z" fill="#4a7ebb"/><path d="M2327,157 H2331.5 C2334.5,157 2335.5,159.5 2335.5,162 C2335.5,165 2333.5,167 2330.5,167" fill="none" stroke="#4a7ebb" stroke-width="3.2"/><rect x="2326.5" y="159" width="3.5" height="4" fill="#fff"/><rect x="2307.8" y="187.2" width="25" height="28.5" fill="#fff" stroke="#555" stroke-width="2"/><rect x="2311.2" y="192.4" width="17.5" height="1.6" fill="#555"/><rect x="2315" y="196.6" width="13.7" height="1.6" fill="#4a7ebb"/><rect x="2311.2" y="196.4" width="2" height="1.8" fill="#444"/><rect x="2311.2" y="200.7" width="2" height="1.8" fill="#444"/><rect x="2315" y="200.7" width="4" height="1.6" fill="#4a7ebb"/><rect x="2311.2" y="204.6" width="2" height="1.8" fill="#444"/><rect x="2315" y="204.6" width="4" height="1.6" fill="#4a7ebb"/><rect x="2311.2" y="208.9" width="2" height="1.8" fill="#444"/><rect x="2315" y="208.9" width="4" height="1.6" fill="#4a7ebb"/><text x="2321" y="213" font-family="Liberation Sans" font-weight="700" font-size="14" fill="#72a893">$</text><rect x="2306" y="235" width="16.5" height="17.8" fill="#c8c8c8" stroke="#4a7ebb" stroke-width="2"/><rect x="2305" y="234" width="18.5" height="3.8" fill="#4a7ebb"/><rect x="2309.8" y="237.8" width="1" height="14" fill="#f4f4f4"/><rect x="2313.6" y="237.8" width="1" height="14" fill="#f4f4f4"/><rect x="2317.4" y="237.8" width="1" height="14" fill="#f4f4f4"/><rect x="2307" y="241" width="14.5" height="1" fill="#f4f4f4"/><rect x="2307" y="244.8" width="14.5" height="1" fill="#f4f4f4"/><rect x="2307" y="248.6" width="14.5" height="1" fill="#f4f4f4"/><rect x="2325.4" y="238.3" width="1.6" height="11.3" fill="#4a7ebb"/><rect x="2329.2" y="242" width="1.8" height="7.6" fill="#4a7ebb"/><rect x="2309.3" y="256" width="11.3" height="1.6" fill="#4a7ebb"/><rect x="2313.1" y="260.2" width="7.6" height="1.6" fill="#4a7ebb"/><rect x="2323" y="252" width="8" height="6" fill="#dc6a45"/><path d="M2323,260.8 H2334 V255.4 H2337" fill="none" stroke="#dc6a45" stroke-width="1.6"/><rect x="2325" y="264" width="2" height="2" fill="#dc6a45"/><rect x="2331" y="264" width="2" height="2" fill="#dc6a45"/><path d="M2577.5,167.8 V156 H2583 V154 H2590 V156 H2594 V151 H2599 V140 H2603.5 V155 H2606.7 V167.8 Z" fill="#de6443"/><rect x="2582" y="158" width="1.5" height="7" fill="#f0b09a"/><rect x="2586.5" y="158" width="1.5" height="7" fill="#f0b09a"/><rect x="2591" y="158" width="1.5" height="7" fill="#f0b09a"/><rect x="2577" y="151.9" width="11.8" height="4.2" fill="#72a893"/><rect x="2580.8" y="146.2" width="4.3" height="15.5" fill="#72a893"/><path d="M2601,187 H2582.2 V217 H2585" fill="none" stroke="#808080" stroke-width="1.6"/><path d="M2601,187 L2605.8,191.5 V196" fill="none" stroke="#808080" stroke-width="1.6"/><path d="M2600.5,187 V192.5 H2605.8" fill="none" stroke="#808080" stroke-width="1.4"/><path d="M2587,217.8 V204.5 H2590 V202.6 H2594 V204.5 H2597 V202.6 H2600.5 V204.5 H2602 V198 H2609 V217.8 Z" fill="#dc6a45"/><rect x="2590.5" y="210.2" width="4" height="1.8" fill="#fff"/><rect x="2598" y="210.2" width="4" height="1.8" fill="#fff"/><rect x="2590.5" y="214" width="4" height="1.8" fill="#fff"/><rect x="2598" y="214" width="4" height="1.8" fill="#fff"/><rect x="2585" y="196" width="9" height="3" fill="#72a893"/><path d="M2593,192 L2597,197.5 L2593,203 Z" fill="#72a893"/><rect x="2590" y="197" width="2.5" height="7" fill="#72a893"/><rect x="2578.8" y="235.8" width="28.4" height="6.1" fill="#ecc06c"/><rect x="2578.8" y="244.3" width="28.4" height="17.4" fill="#ecc06c"/><circle cx="2600" cy="256.5" r="9" fill="#fff"/><circle cx="2600" cy="256.5" r="5.6" fill="none" stroke="#4a7ebb" stroke-width="2.6"/><rect x="2605.90" y="255.20" width="2.6" height="2.6" fill="#4a7ebb"/><rect x="2603.79" y="260.29" width="2.6" height="2.6" fill="#4a7ebb"/><rect x="2598.70" y="262.40" width="2.6" height="2.6" fill="#4a7ebb"/><rect x="2593.61" y="260.29" width="2.6" height="2.6" fill="#4a7ebb"/><rect x="2591.50" y="255.20" width="2.6" height="2.6" fill="#4a7ebb"/><rect x="2593.61" y="250.11" width="2.6" height="2.6" fill="#4a7ebb"/><rect x="2598.70" y="248.00" width="2.6" height="2.6" fill="#4a7ebb"/><rect x="2603.79" y="250.11" width="2.6" height="2.6" fill="#4a7ebb"/><rect x="2649.1" y="141.9" width="19.9" height="3.8" fill="#808080"/><rect x="2649.1" y="148.00000000000003" width="19.9" height="15.6" fill="#808080"/><rect x="2660.9" y="150.00000000000003" width="6.1" height="3.7" fill="#ffffff"/><rect x="2644.5" y="191" width="27.2" height="22.6" fill="#fff" stroke="#4a7ebb" stroke-width="2"/><rect x="2649.3" y="196.2" width="1.8" height="11.3" fill="#6a6a6a"/><rect x="2653.3" y="196.2" width="1.8" height="9.2" fill="#6a6a6a"/><rect x="2657.3" y="196.2" width="1.8" height="9.2" fill="#6a6a6a"/><rect x="2661.3" y="196.2" width="1.8" height="9.2" fill="#6a6a6a"/><rect x="2665.3" y="196.2" width="1.8" height="11.3" fill="#6a6a6a"/><path d="M2653,265.7 V250 H2650 V243 L2658,234.3 H2662 L2672.5,243 V265.7 Z" fill="#72a893"/><rect x="2658.5" y="238.5" width="3.4" height="3" fill="#fff"/><text x="2657" y="262" font-family="Liberation Sans" font-weight="700" font-size="15" fill="#cfe5dc">$</text><rect x="2643.3" y="248.4" width="12.4" height="16.4" fill="#fff" stroke="#4a7ebb" stroke-width="2"/><rect x="2647" y="252.5" width="5" height="1.6" fill="#9a9a9a"/><rect x="2647" y="256.4" width="5" height="1.6" fill="#9a9a9a"/><rect x="2647" y="260.2" width="5" height="1.6" fill="#9a9a9a"/><path d="M316.20,401.59 A8.3,8.3 0 0 1 326.15,390.73" fill="none" stroke="#72a893" stroke-width="4"/><path d="M325.14819807435094,383.23281564180076 L334.14819807435094,390.73281564180076 L325.14819807435094,398.23281564180076 Z" fill="#72a893"/><path d="M331.80,395.91 A8.3,8.3 0 0 1 321.85,406.77" fill="none" stroke="#4a7ebb" stroke-width="4"/><path d="M322.85180192564906,399.26718435819924 L313.85180192564906,406.76718435819924 L322.85180192564906,414.26718435819924 Z" fill="#4a7ebb"/><circle cx="488.2" cy="400.1" r="12" fill="#efefef" stroke="#dc6a45" stroke-width="3"/><rect x="486.7" y="392.1" width="3.3" height="9.5" fill="#808080"/><rect x="486.7" y="398.5" width="7.6" height="3.3" fill="#808080"/><path d="M672.8,384.7 H689.5 L694,389 V411 H672.8 Z" fill="#fff" stroke="#808080" stroke-width="1.6"/><path d="M689.5,384.7 V389.5 H694" fill="none" stroke="#808080" stroke-width="1.4"/><rect x="688.2" y="398.4" width="15.8" height="15.1" fill="#72a893"/><path d="M692.5,402.5 L699.5,409.5 M699.5,402.5 L692.5,409.5" stroke="#dbece5" stroke-width="1.6"/><path d="M691,398 C691,392 694,389 699,389" fill="none" stroke="#dc6a45" stroke-width="2.4"/><path d="M698,384.5 L704,389 L698,393.5 Z" fill="#dc6a45"/><rect x="900" y="384.5" width="20" height="8" fill="#fff" stroke="#808080" stroke-width="1.8"/><rect x="894.5" y="391.5" width="31" height="14" rx="2" fill="#808080"/><rect x="899.5" y="401" width="21" height="13.5" fill="#fff" stroke="#808080" stroke-width="1.8"/><rect x="903" y="405" width="14" height="1.6" fill="#4a7ebb"/><rect x="903" y="409" width="14" height="1.6" fill="#4a7ebb"/><path d="M1053,415.5 H1050.5 V384.5 H1071.5 L1073,386 V393" fill="none" stroke="#808080" stroke-width="1.6"/><rect x="1056" y="395.8" width="22.3" height="20.8" fill="#4a7ebb"/><rect x="1060.5" y="395.8" width="12" height="7" fill="#fff"/><rect x="1066.5" y="397" width="3" height="4.5" fill="#4a7ebb"/><rect x="1060" y="406.5" width="14" height="7" fill="#dfe9f4"/><rect x="1062" y="409" width="10" height="1.4" fill="#4a7ebb"/><path d="M1250.5,386.5 H1268 L1273.5,392 V414 H1250.5 Z" fill="#fff" stroke="#808080" stroke-width="1.6"/><path d="M1267.5,386.5 V392.5 H1273.5" fill="none" stroke="#808080" stroke-width="1.4"/><rect x="1260" y="402.5" width="16.5" height="4" fill="#dc6a45"/></g>
<g><text x="959.0" y="44.3" font-size="24" font-weight="400" fill="#ffffff" stroke="#6aae2e" stroke-width="0.5" textLength="212.0" lengthAdjust="spacingAndGlyphs">Avance de Producción</text><text x="1179.0" y="44.3" font-size="24" font-weight="400" fill="#cfe3ea" stroke="#6aae2e" stroke-width="0.5" textLength="594.5" lengthAdjust="spacingAndGlyphs">- SIMAC (2.3.48) - ESTRATEGA SISTEMAS, S.A DE C.V. DEMO</text><text x="2234.4" y="43.9" font-size="24" font-weight="700" fill="#ffffff" stroke="#6aae2e" stroke-width="0.2" textLength="163.4" lengthAdjust="spacingAndGlyphs">Administrador</text><text x="2420.0" y="48.0" font-size="33" font-weight="400" fill="#ffffff" stroke="#6aae2e" stroke-width="0.5" textLength="21.0" lengthAdjust="spacingAndGlyphs">?</text><text x="153.3" y="109.5" font-size="28" font-weight="400" fill="#3d3d3d" stroke="#ffffff" stroke-width="0.5" textLength="121.7" lengthAdjust="spacingAndGlyphs">Catálogos</text><text x="341.4" y="109.5" font-size="28" font-weight="400" fill="#3d3d3d" stroke="#ffffff" stroke-width="0.5" textLength="138.2" lengthAdjust="spacingAndGlyphs">Producción</text><text x="548.0" y="109.5" font-size="28" font-weight="400" fill="#3d3d3d" stroke="#ffffff" stroke-width="0.5" textLength="111.3" lengthAdjust="spacingAndGlyphs">Reportes</text><text x="725.4" y="109.5" font-size="28" font-weight="400" fill="#3d3d3d" stroke="#ffffff" stroke-width="0.5" textLength="201.6" lengthAdjust="spacingAndGlyphs">Análisis de Datos</text><text x="994.2" y="109.5" font-size="28" font-weight="400" fill="#3d3d3d" stroke="#ffffff" stroke-width="0.5" textLength="48.8" lengthAdjust="spacingAndGlyphs">DDI</text><text x="17.4" y="233.7" font-size="22.5" font-weight="400" fill="#3d3d3d" stroke="#ffffff" stroke-width="0.5" textLength="125.8" lengthAdjust="spacingAndGlyphs">Plan Maestro</text><text x="14.9" y="259.7" font-size="22.5" font-weight="400" fill="#3d3d3d" stroke="#ffffff" stroke-width="0.5" textLength="134.1" lengthAdjust="spacingAndGlyphs">de Producción</text><text x="164.7" y="233.7" font-size="22.5" font-weight="400" fill="#3d3d3d" stroke="#ffffff" stroke-width="0.5" textLength="102.3" lengthAdjust="spacingAndGlyphs">Programas</text><text x="282.6" y="233.7" font-size="22.5" font-weight="400" fill="#3d3d3d" stroke="#ffffff" stroke-width="0.5" textLength="130.9" lengthAdjust="spacingAndGlyphs">Programación</text><text x="428.9" y="233.7" font-size="22.5" font-weight="400" fill="#3d3d3d" stroke="#ffffff" stroke-width="0.5" textLength="102.1" lengthAdjust="spacingAndGlyphs">Planeación</text><text x="558.6" y="233.7" font-size="22.5" font-weight="400" fill="#3d3d3d" stroke="#ffffff" stroke-width="0.5" textLength="78.7" lengthAdjust="spacingAndGlyphs">Captura</text><text x="546.8" y="259.7" font-size="22.5" font-weight="400" fill="#3d3d3d" stroke="#ffffff" stroke-width="0.5" textLength="102.2" lengthAdjust="spacingAndGlyphs">de Avance</text><text x="664.7" y="233.7" font-size="22.5" font-weight="400" fill="#3d3d3d" stroke="#ffffff" stroke-width="0.5" textLength="96.3" lengthAdjust="spacingAndGlyphs">Reasignar</text><text x="681.0" y="259.7" font-size="22.5" font-weight="400" fill="#3d3d3d" stroke="#ffffff" stroke-width="0.5" textLength="61.7" lengthAdjust="spacingAndGlyphs">Planta</text><text x="818.2" y="162.2" font-size="22.5" font-weight="400" fill="#3d3d3d" stroke="#ffffff" stroke-width="0.5" textLength="162.7" lengthAdjust="spacingAndGlyphs">Cancelar Avance</text><text x="818.2" y="210.3" font-size="22.5" font-weight="400" fill="#3d3d3d" stroke="#ffffff" stroke-width="0.5" textLength="169.8" lengthAdjust="spacingAndGlyphs">Lotes Terminados</text><text x="818.2" y="257.9" font-size="22.5" font-weight="400" fill="#3d3d3d" stroke="#ffffff" stroke-width="0.5" textLength="156.5" lengthAdjust="spacingAndGlyphs">Entrada Unitaria</text><text x="448.8" y="305.4" font-size="22" font-weight="400" fill="#3d3d3d" stroke="#ffffff" stroke-width="0.5" textLength="104.4" lengthAdjust="spacingAndGlyphs">Producción</text><text x="1020.8" y="233.6" font-size="22.5" font-weight="400" fill="#3d3d3d" stroke="#ffffff" stroke-width="0.5" textLength="102.1" lengthAdjust="spacingAndGlyphs">Avance de</text><text x="1020.8" y="260.0" font-size="22.5" font-weight="400" fill="#3d3d3d" stroke="#ffffff" stroke-width="0.5" textLength="104.0" lengthAdjust="spacingAndGlyphs">Producción</text><text x="1182.4" y="162.2" font-size="22.5" font-weight="400" fill="#3d3d3d" stroke="#ffffff" stroke-width="0.5" textLength="186.9" lengthAdjust="spacingAndGlyphs">Libro de Producción</text><text x="1182.4" y="210.3" font-size="22.5" font-weight="400" fill="#3d3d3d" stroke="#ffffff" stroke-width="0.5" textLength="193.6" lengthAdjust="spacingAndGlyphs">Lotes en Producción</text><text x="1182.4" y="257.9" font-size="22.5" font-weight="400" fill="#3d3d3d" stroke="#ffffff" stroke-width="0.5" textLength="189.1" lengthAdjust="spacingAndGlyphs">Producción Lograda</text><text x="1162.0" y="305.4" font-size="22" font-weight="400" fill="#3d3d3d" stroke="#ffffff" stroke-width="0.5" textLength="117.2" lengthAdjust="spacingAndGlyphs">Seguimiento</text><text x="1499.5" y="161.8" font-size="22.5" font-weight="400" fill="#3d3d3d" stroke="#ffffff" stroke-width="0.5" textLength="222.9" lengthAdjust="spacingAndGlyphs">Consumo de Materiales</text><text x="1499.5" y="209.6" font-size="22.5" font-weight="400" fill="#3d3d3d" stroke="#ffffff" stroke-width="0.5" textLength="167.1" lengthAdjust="spacingAndGlyphs">Actualizar Costos</text><text x="1499.5" y="257.8" font-size="22.5" font-weight="400" fill="#3d3d3d" stroke="#ffffff" stroke-width="0.5" textLength="119.0" lengthAdjust="spacingAndGlyphs">Movimientos</text><text x="1779.5" y="161.8" font-size="22.5" font-weight="400" fill="#8a8a8a" stroke="#ffffff" stroke-width="0.5" textLength="67.0" lengthAdjust="spacingAndGlyphs">Salidas</text><text x="1779.5" y="209.6" font-size="22.5" font-weight="400" fill="#8a8a8a" stroke="#ffffff" stroke-width="0.5" textLength="87.0" lengthAdjust="spacingAndGlyphs">Entradas</text><text x="1779.5" y="257.8" font-size="22.5" font-weight="400" fill="#3d3d3d" stroke="#ffffff" stroke-width="0.5" textLength="184.8" lengthAdjust="spacingAndGlyphs">Vales de Materiales</text><text x="1669.9" y="305.4" font-size="22" font-weight="400" fill="#3d3d3d" stroke="#ffffff" stroke-width="0.5" textLength="130.0" lengthAdjust="spacingAndGlyphs">Materia Prima</text><text x="2087.5" y="162.2" font-size="22.5" font-weight="400" fill="#3d3d3d" stroke="#ffffff" stroke-width="0.5" textLength="201.1" lengthAdjust="spacingAndGlyphs">Registro de Destajos</text><text x="2087.5" y="209.4" font-size="22.5" font-weight="400" fill="#3d3d3d" stroke="#ffffff" stroke-width="0.5" textLength="150.9" lengthAdjust="spacingAndGlyphs">Historial - Corte</text><text x="2087.5" y="257.3" font-size="22.5" font-weight="400" fill="#3d3d3d" stroke="#ffffff" stroke-width="0.5" textLength="176.7" lengthAdjust="spacingAndGlyphs">Preasignar Células</text><text x="2345.4" y="162.2" font-size="22.5" font-weight="400" fill="#3d3d3d" stroke="#ffffff" stroke-width="0.5" textLength="103.2" lengthAdjust="spacingAndGlyphs">Remplazos</text><text x="2345.4" y="209.4" font-size="22.5" font-weight="400" fill="#3d3d3d" stroke="#ffffff" stroke-width="0.5" textLength="163.7" lengthAdjust="spacingAndGlyphs">Listado de Pagos</text><text x="2345.4" y="257.3" font-size="22.5" font-weight="400" fill="#3d3d3d" stroke="#ffffff" stroke-width="0.5" textLength="214.7" lengthAdjust="spacingAndGlyphs">Maquila por Operación</text><text x="2258.0" y="305.4" font-size="22" font-weight="400" fill="#3d3d3d" stroke="#ffffff" stroke-width="0.5" textLength="136.6" lengthAdjust="spacingAndGlyphs">Mano de Obra</text><text x="2648.0" y="305.4" font-size="22" font-weight="400" fill="#3d3d3d" stroke="#ffffff" stroke-width="0.5" textLength="19.0" lengthAdjust="spacingAndGlyphs">...</text><text x="17.0" y="348.0" font-size="23" font-weight="400" fill="#333333" stroke="#f3f3f3" stroke-width="0.5" textLength="212.0" lengthAdjust="spacingAndGlyphs">Avance de Producción</text><text x="12.0" y="407.7" font-size="23" font-weight="400" fill="#333333" stroke="#efefef" stroke-width="0.5" textLength="56.0" lengthAdjust="spacingAndGlyphs">Línea</text><text x="86.8" y="407.7" font-size="22" font-weight="400" fill="#333333" stroke="#ffffff" stroke-width="0.5" textLength="88.2" lengthAdjust="spacingAndGlyphs">MUEBLES</text><text x="348.0" y="407.8" font-size="23" font-weight="400" fill="#3d3d3d" stroke="#efefef" stroke-width="0.5" textLength="104.0" lengthAdjust="spacingAndGlyphs">Actualizar</text><text x="512.0" y="407.8" font-size="23" font-weight="400" fill="#3d3d3d" stroke="#efefef" stroke-width="0.5" textLength="139.2" lengthAdjust="spacingAndGlyphs">Mostrar Hora</text><text x="711.3" y="407.8" font-size="23" font-weight="400" fill="#3d3d3d" stroke="#efefef" stroke-width="0.5" textLength="163.4" lengthAdjust="spacingAndGlyphs">Exportar a Excel</text><text x="934.0" y="407.8" font-size="23" font-weight="400" fill="#3d3d3d" stroke="#efefef" stroke-width="0.5" textLength="92.5" lengthAdjust="spacingAndGlyphs">Imprimir</text><text x="1086.0" y="407.8" font-size="23" font-weight="400" fill="#3d3d3d" stroke="#efefef" stroke-width="0.5" textLength="140.5" lengthAdjust="spacingAndGlyphs">Guardar Vista</text><text x="1285.7" y="407.8" font-size="23" font-weight="400" fill="#3d3d3d" stroke="#efefef" stroke-width="0.5" textLength="155.7" lengthAdjust="spacingAndGlyphs">Restaurar Vista</text><text x="13.6" y="517.6" font-size="23" font-weight="700" fill="#6b6b6b" stroke="#f8f8f8" stroke-width="0.2" textLength="112.4" lengthAdjust="spacingAndGlyphs">Programa</text><text x="167.0" y="517.6" font-size="23" font-weight="700" fill="#6b6b6b" stroke="#f8f8f8" stroke-width="0.2" textLength="51.8" lengthAdjust="spacingAndGlyphs">Lote</text><text x="258.8" y="517.6" font-size="23" font-weight="700" fill="#6b6b6b" stroke="#f8f8f8" stroke-width="0.2" textLength="131.7" lengthAdjust="spacingAndGlyphs">Descripción</text><text x="647.8" y="517.6" font-size="23" font-weight="700" fill="#6b6b6b" stroke="#f8f8f8" stroke-width="0.2" textLength="78.7" lengthAdjust="spacingAndGlyphs">Cliente</text><text x="1007.5" y="517.6" font-size="23" font-weight="700" fill="#6b6b6b" stroke="#f8f8f8" stroke-width="0.2" textLength="77.3" lengthAdjust="spacingAndGlyphs">Pedido</text><text x="1125.0" y="517.6" font-size="23" font-weight="700" fill="#6b6b6b" stroke="#f8f8f8" stroke-width="0.2" textLength="183.7" lengthAdjust="spacingAndGlyphs">Fecha de Pedido</text><text x="1349.0" y="517.6" font-size="23" font-weight="700" fill="#6b6b6b" stroke="#f8f8f8" stroke-width="0.2" textLength="142.8" lengthAdjust="spacingAndGlyphs">Fecha de E...</text><text x="1512.2" y="517.6" font-size="23" font-weight="700" fill="#6b6b6b" stroke="#f8f8f8" stroke-width="0.2" textLength="101.5" lengthAdjust="spacingAndGlyphs">Cantidad</text><text x="1626.0" y="517.6" font-size="23" font-weight="700" fill="#6b6b6b" stroke="#f8f8f8" stroke-width="0.2" textLength="91.7" lengthAdjust="spacingAndGlyphs">Dias e...</text><text x="1736.0" y="471.8" font-size="22.5" font-weight="400" fill="#737396" stroke="#f8f8f8" stroke-width="0.5" textLength="96.2" lengthAdjust="spacingAndGlyphs">DEPTO 10</text><text x="1886.0" y="471.8" font-size="22.5" font-weight="400" fill="#737396" stroke="#f8f8f8" stroke-width="0.5" textLength="96.2" lengthAdjust="spacingAndGlyphs">DEPTO 20</text><text x="2036.0" y="471.8" font-size="22.5" font-weight="400" fill="#737396" stroke="#f8f8f8" stroke-width="0.5" textLength="96.2" lengthAdjust="spacingAndGlyphs">DEPTO 30</text><text x="2186.0" y="471.8" font-size="22.5" font-weight="400" fill="#737396" stroke="#f8f8f8" stroke-width="0.5" textLength="96.2" lengthAdjust="spacingAndGlyphs">DEPTO 40</text><text x="2336.0" y="471.8" font-size="22.5" font-weight="400" fill="#737396" stroke="#f8f8f8" stroke-width="0.5" textLength="96.2" lengthAdjust="spacingAndGlyphs">DEPTO 50</text><text x="2486.0" y="471.8" font-size="22.5" font-weight="400" fill="#737396" stroke="#f8f8f8" stroke-width="0.5" textLength="96.2" lengthAdjust="spacingAndGlyphs">DEPTO 70</text><text x="2636.0" y="471.8" font-size="22.5" font-weight="400" fill="#737396" stroke="#f8f8f8" stroke-width="0.5" textLength="96.2" lengthAdjust="spacingAndGlyphs">DEPTO 80</text><text x="15.3" y="611.7" font-size="22.5" font-weight="400" fill="#333333" stroke="#ffffff" stroke-width="0.5" textLength="72.8" lengthAdjust="spacingAndGlyphs">242901</text><text x="236.1" y="611.7" font-size="22.5" font-weight="400" fill="#333333" stroke="#ffffff" stroke-width="0.5" textLength="12.7" lengthAdjust="spacingAndGlyphs">2</text><text x="261.0" y="611.7" font-size="22.5" font-weight="400" fill="#333333" stroke="#ffffff" stroke-width="0.35" textLength="338.5" lengthAdjust="spacingAndGlyphs">DESAYUNADOR GRANDE ONTARIO</text><text x="648.6" y="611.7" font-size="22.5" font-weight="400" fill="#333333" stroke="#ffffff" stroke-width="0.35" textLength="274.3" lengthAdjust="spacingAndGlyphs">MUEBLERIA ESPECIALIZADA</text><text x="1007.7" y="611.7" font-size="22.5" font-weight="400" fill="#333333" stroke="#ffffff" stroke-width="0.5" textLength="60.3" lengthAdjust="spacingAndGlyphs">P-A54</text><text x="1126.2" y="611.7" font-size="22.5" font-weight="400" fill="#333333" stroke="#ffffff" stroke-width="0.5" textLength="113.0" lengthAdjust="spacingAndGlyphs">31/07/2024</text><text x="1350.7" y="611.7" font-size="22.5" font-weight="400" fill="#333333" stroke="#ffffff" stroke-width="0.5" textLength="113.0" lengthAdjust="spacingAndGlyphs">31/07/2024</text><text x="1546.2" y="611.7" font-size="22.5" font-weight="400" fill="#333333" stroke="#ffffff" stroke-width="0.5" textLength="67.7" lengthAdjust="spacingAndGlyphs">2.0000</text><text x="1688.6" y="611.7" font-size="22.5" font-weight="400" fill="#333333" stroke="#ffffff" stroke-width="0.5" textLength="35.9" lengthAdjust="spacingAndGlyphs">155</text><text x="1738.0" y="611.7" font-size="22.5" font-weight="400" fill="#333333" stroke="#90ee90" stroke-width="0.5" textLength="113.0" lengthAdjust="spacingAndGlyphs">08/08/2024</text><text x="1888.0" y="611.7" font-size="22.5" font-weight="400" fill="#333333" stroke="#90ee90" stroke-width="0.5" textLength="106.3" lengthAdjust="spacingAndGlyphs">En Proceso</text><text x="15.3" y="657.7" font-size="22.5" font-weight="400" fill="#333333" stroke="#ffffff" stroke-width="0.5" textLength="72.8" lengthAdjust="spacingAndGlyphs">242901</text><text x="235.1" y="657.7" font-size="22.5" font-weight="400" fill="#333333" stroke="#ffffff" stroke-width="0.5" textLength="13.7" lengthAdjust="spacingAndGlyphs">4</text><text x="261.0" y="657.7" font-size="22.5" font-weight="400" fill="#333333" stroke="#ffffff" stroke-width="0.35" textLength="365.0" lengthAdjust="spacingAndGlyphs">ALACENA PRAGA CON PORTAGARR...</text><text x="648.6" y="657.7" font-size="22.5" font-weight="400" fill="#333333" stroke="#ffffff" stroke-width="0.35" textLength="290.4" lengthAdjust="spacingAndGlyphs">MAZZARONNI CON REMISION</text><text x="1007.7" y="657.7" font-size="22.5" font-weight="400" fill="#333333" stroke="#ffffff" stroke-width="0.5" textLength="60.3" lengthAdjust="spacingAndGlyphs">P-A55</text><text x="1126.2" y="657.7" font-size="22.5" font-weight="400" fill="#333333" stroke="#ffffff" stroke-width="0.5" textLength="113.0" lengthAdjust="spacingAndGlyphs">31/07/2024</text><text x="1350.7" y="657.7" font-size="22.5" font-weight="400" fill="#333333" stroke="#ffffff" stroke-width="0.5" textLength="113.0" lengthAdjust="spacingAndGlyphs">31/07/2024</text><text x="1534.0" y="657.7" font-size="22.5" font-weight="400" fill="#333333" stroke="#ffffff" stroke-width="0.5" textLength="79.9" lengthAdjust="spacingAndGlyphs">10.0000</text><text x="1688.6" y="657.7" font-size="22.5" font-weight="400" fill="#333333" stroke="#ffffff" stroke-width="0.5" textLength="35.9" lengthAdjust="spacingAndGlyphs">155</text><text x="1738.0" y="657.7" font-size="22.5" font-weight="400" fill="#333333" stroke="#90ee90" stroke-width="0.5" textLength="106.3" lengthAdjust="spacingAndGlyphs">En Proceso</text><text x="15.3" y="703.7" font-size="22.5" font-weight="400" fill="#333333" stroke="#ffffff" stroke-width="0.5" textLength="72.8" lengthAdjust="spacingAndGlyphs">242901</text><text x="235.1" y="703.7" font-size="22.5" font-weight="400" fill="#333333" stroke="#ffffff" stroke-width="0.5" textLength="13.7" lengthAdjust="spacingAndGlyphs">5</text><text x="261.0" y="703.7" font-size="22.5" font-weight="400" fill="#333333" stroke="#ffffff" stroke-width="0.35" textLength="338.5" lengthAdjust="spacingAndGlyphs">DESAYUNADOR GRANDE ONTARIO</text><text x="648.6" y="703.7" font-size="22.5" font-weight="400" fill="#333333" stroke="#ffffff" stroke-width="0.35" textLength="290.4" lengthAdjust="spacingAndGlyphs">MAZZARONNI CON REMISION</text><text x="1007.7" y="703.7" font-size="22.5" font-weight="400" fill="#333333" stroke="#ffffff" stroke-width="0.5" textLength="60.3" lengthAdjust="spacingAndGlyphs">P-A55</text><text x="1126.2" y="703.7" font-size="22.5" font-weight="400" fill="#333333" stroke="#ffffff" stroke-width="0.5" textLength="113.0" lengthAdjust="spacingAndGlyphs">31/07/2024</text><text x="1350.7" y="703.7" font-size="22.5" font-weight="400" fill="#333333" stroke="#ffffff" stroke-width="0.5" textLength="113.0" lengthAdjust="spacingAndGlyphs">31/07/2024</text><text x="1545.2" y="703.7" font-size="22.5" font-weight="400" fill="#333333" stroke="#ffffff" stroke-width="0.5" textLength="68.7" lengthAdjust="spacingAndGlyphs">4.0000</text><text x="1688.6" y="703.7" font-size="22.5" font-weight="400" fill="#333333" stroke="#ffffff" stroke-width="0.5" textLength="35.9" lengthAdjust="spacingAndGlyphs">155</text><text x="1738.0" y="703.7" font-size="22.5" font-weight="400" fill="#333333" stroke="#90ee90" stroke-width="0.5" textLength="106.3" lengthAdjust="spacingAndGlyphs">En Proceso</text><text x="15.3" y="749.7" font-size="22.5" font-weight="400" fill="#333333" stroke="#ffffff" stroke-width="0.5" textLength="72.8" lengthAdjust="spacingAndGlyphs">242901</text><text x="236.1" y="749.7" font-size="22.5" font-weight="400" fill="#333333" stroke="#ffffff" stroke-width="0.5" textLength="12.7" lengthAdjust="spacingAndGlyphs">6</text><text x="261.0" y="749.7" font-size="22.5" font-weight="400" fill="#333333" stroke="#ffffff" stroke-width="0.35" textLength="325.5" lengthAdjust="spacingAndGlyphs">MESA PLEGABLE AZUL PATA AZUL</text><text x="648.6" y="749.7" font-size="22.5" font-weight="400" fill="#333333" stroke="#ffffff" stroke-width="0.35" textLength="290.4" lengthAdjust="spacingAndGlyphs">MAZZARONNI CON REMISION</text><text x="1007.7" y="749.7" font-size="22.5" font-weight="400" fill="#333333" stroke="#ffffff" stroke-width="0.5" textLength="60.3" lengthAdjust="spacingAndGlyphs">P-A55</text><text x="1126.2" y="749.7" font-size="22.5" font-weight="400" fill="#333333" stroke="#ffffff" stroke-width="0.5" textLength="113.0" lengthAdjust="spacingAndGlyphs">31/07/2024</text><text x="1350.7" y="749.7" font-size="22.5" font-weight="400" fill="#333333" stroke="#ffffff" stroke-width="0.5" textLength="113.0" lengthAdjust="spacingAndGlyphs">31/07/2024</text><text x="1545.2" y="749.7" font-size="22.5" font-weight="400" fill="#333333" stroke="#ffffff" stroke-width="0.5" textLength="68.7" lengthAdjust="spacingAndGlyphs">5.0000</text><text x="1688.6" y="749.7" font-size="22.5" font-weight="400" fill="#333333" stroke="#ffffff" stroke-width="0.5" textLength="35.9" lengthAdjust="spacingAndGlyphs">155</text><text x="1738.0" y="749.7" font-size="22.5" font-weight="400" fill="#333333" stroke="#90ee90" stroke-width="0.5" textLength="106.3" lengthAdjust="spacingAndGlyphs">En Proceso</text><text x="15.3" y="795.7" font-size="22.5" font-weight="400" fill="#333333" stroke="#ffffff" stroke-width="0.5" textLength="72.8" lengthAdjust="spacingAndGlyphs">242901</text><text x="236.1" y="795.7" font-size="22.5" font-weight="400" fill="#333333" stroke="#ffffff" stroke-width="0.5" textLength="12.7" lengthAdjust="spacingAndGlyphs">7</text><text x="261.0" y="795.7" font-size="22.5" font-weight="400" fill="#333333" stroke="#ffffff" stroke-width="0.35" textLength="365.0" lengthAdjust="spacingAndGlyphs">ALACENA PRAGA CON PORTAGARR...</text><text x="648.6" y="795.7" font-size="22.5" font-weight="400" fill="#333333" stroke="#ffffff" stroke-width="0.35" textLength="290.4" lengthAdjust="spacingAndGlyphs">MAZZARONNI CON REMISION</text><text x="1007.7" y="795.7" font-size="22.5" font-weight="400" fill="#333333" stroke="#ffffff" stroke-width="0.5" textLength="60.3" lengthAdjust="spacingAndGlyphs">P-A56</text><text x="1126.2" y="795.7" font-size="22.5" font-weight="400" fill="#333333" stroke="#ffffff" stroke-width="0.5" textLength="113.0" lengthAdjust="spacingAndGlyphs">31/07/2024</text><text x="1350.7" y="795.7" font-size="22.5" font-weight="400" fill="#333333" stroke="#ffffff" stroke-width="0.5" textLength="113.0" lengthAdjust="spacingAndGlyphs">31/07/2024</text><text x="1545.2" y="795.7" font-size="22.5" font-weight="400" fill="#333333" stroke="#ffffff" stroke-width="0.5" textLength="68.7" lengthAdjust="spacingAndGlyphs">3.0000</text><text x="1688.6" y="795.7" font-size="22.5" font-weight="400" fill="#333333" stroke="#ffffff" stroke-width="0.5" textLength="35.9" lengthAdjust="spacingAndGlyphs">155</text><text x="1738.0" y="795.7" font-size="22.5" font-weight="400" fill="#333333" stroke="#90ee90" stroke-width="0.5" textLength="106.3" lengthAdjust="spacingAndGlyphs">En Proceso</text><text x="15.3" y="841.7" font-size="22.5" font-weight="400" fill="#333333" stroke="#ffffff" stroke-width="0.5" textLength="72.8" lengthAdjust="spacingAndGlyphs">242901</text><text x="235.1" y="841.7" font-size="22.5" font-weight="400" fill="#333333" stroke="#ffffff" stroke-width="0.5" textLength="13.7" lengthAdjust="spacingAndGlyphs">8</text><text x="261.0" y="841.7" font-size="22.5" font-weight="400" fill="#333333" stroke="#ffffff" stroke-width="0.35" textLength="338.5" lengthAdjust="spacingAndGlyphs">DESAYUNADOR GRANDE ONTARIO</text><text x="648.6" y="841.7" font-size="22.5" font-weight="400" fill="#333333" stroke="#ffffff" stroke-width="0.35" textLength="290.4" lengthAdjust="spacingAndGlyphs">MAZZARONNI CON REMISION</text><text x="1007.7" y="841.7" font-size="22.5" font-weight="400" fill="#333333" stroke="#ffffff" stroke-width="0.5" textLength="60.3" lengthAdjust="spacingAndGlyphs">P-A56</text><text x="1126.2" y="841.7" font-size="22.5" font-weight="400" fill="#333333" stroke="#ffffff" stroke-width="0.5" textLength="113.0" lengthAdjust="spacingAndGlyphs">31/07/2024</text><text x="1350.7" y="841.7" font-size="22.5" font-weight="400" fill="#333333" stroke="#ffffff" stroke-width="0.5" textLength="113.0" lengthAdjust="spacingAndGlyphs">31/07/2024</text><text x="1545.2" y="841.7" font-size="22.5" font-weight="400" fill="#333333" stroke="#ffffff" stroke-width="0.5" textLength="68.7" lengthAdjust="spacingAndGlyphs">3.0000</text><text x="1688.6" y="841.7" font-size="22.5" font-weight="400" fill="#333333" stroke="#ffffff" stroke-width="0.5" textLength="35.9" lengthAdjust="spacingAndGlyphs">155</text><text x="1738.0" y="841.7" font-size="22.5" font-weight="400" fill="#333333" stroke="#90ee90" stroke-width="0.5" textLength="106.3" lengthAdjust="spacingAndGlyphs">En Proceso</text><text x="15.3" y="887.7" font-size="22.5" font-weight="400" fill="#333333" stroke="#ffffff" stroke-width="0.5" textLength="72.8" lengthAdjust="spacingAndGlyphs">242901</text><text x="236.1" y="887.7" font-size="22.5" font-weight="400" fill="#333333" stroke="#ffffff" stroke-width="0.5" textLength="12.7" lengthAdjust="spacingAndGlyphs">9</text><text x="261.0" y="887.7" font-size="22.5" font-weight="400" fill="#333333" stroke="#ffffff" stroke-width="0.35" textLength="325.5" lengthAdjust="spacingAndGlyphs">MESA PLEGABLE AZUL PATA AZUL</text><text x="648.6" y="887.7" font-size="22.5" font-weight="400" fill="#333333" stroke="#ffffff" stroke-width="0.35" textLength="290.4" lengthAdjust="spacingAndGlyphs">MAZZARONNI CON REMISION</text><text x="1007.7" y="887.7" font-size="22.5" font-weight="400" fill="#333333" stroke="#ffffff" stroke-width="0.5" textLength="60.3" lengthAdjust="spacingAndGlyphs">P-A56</text><text x="1126.2" y="887.7" font-size="22.5" font-weight="400" fill="#333333" stroke="#ffffff" stroke-width="0.5" textLength="113.0" lengthAdjust="spacingAndGlyphs">31/07/2024</text><text x="1350.7" y="887.7" font-size="22.5" font-weight="400" fill="#333333" stroke="#ffffff" stroke-width="0.5" textLength="113.0" lengthAdjust="spacingAndGlyphs">31/07/2024</text><text x="1545.2" y="887.7" font-size="22.5" font-weight="400" fill="#333333" stroke="#ffffff" stroke-width="0.5" textLength="68.7" lengthAdjust="spacingAndGlyphs">3.0000</text><text x="1688.6" y="887.7" font-size="22.5" font-weight="400" fill="#333333" stroke="#ffffff" stroke-width="0.5" textLength="35.9" lengthAdjust="spacingAndGlyphs">155</text><text x="1738.0" y="887.7" font-size="22.5" font-weight="400" fill="#333333" stroke="#90ee90" stroke-width="0.5" textLength="106.3" lengthAdjust="spacingAndGlyphs">En Proceso</text><text x="15.3" y="933.7" font-size="22.5" font-weight="400" fill="#333333" stroke="#ffffff" stroke-width="0.5" textLength="72.8" lengthAdjust="spacingAndGlyphs">242901</text><text x="223.8" y="933.7" font-size="22.5" font-weight="400" fill="#333333" stroke="#ffffff" stroke-width="0.5" textLength="25.0" lengthAdjust="spacingAndGlyphs">10</text><text x="261.0" y="933.7" font-size="22.5" font-weight="400" fill="#333333" stroke="#ffffff" stroke-width="0.35" textLength="365.0" lengthAdjust="spacingAndGlyphs">ALACENA PRAGA CON PORTAGARR...</text><text x="648.6" y="933.7" font-size="22.5" font-weight="400" fill="#333333" stroke="#ffffff" stroke-width="0.35" textLength="76.2" lengthAdjust="spacingAndGlyphs">COPPEL</text><text x="1007.7" y="933.7" font-size="22.5" font-weight="400" fill="#333333" stroke="#ffffff" stroke-width="0.5" textLength="60.3" lengthAdjust="spacingAndGlyphs">P-A57</text><text x="1126.2" y="933.7" font-size="22.5" font-weight="400" fill="#333333" stroke="#ffffff" stroke-width="0.5" textLength="113.0" lengthAdjust="spacingAndGlyphs">31/07/2024</text><text x="1350.7" y="933.7" font-size="22.5" font-weight="400" fill="#333333" stroke="#ffffff" stroke-width="0.5" textLength="113.0" lengthAdjust="spacingAndGlyphs">31/07/2024</text><text x="1534.0" y="933.7" font-size="22.5" font-weight="400" fill="#333333" stroke="#ffffff" stroke-width="0.5" textLength="79.9" lengthAdjust="spacingAndGlyphs">15.0000</text><text x="1688.6" y="933.7" font-size="22.5" font-weight="400" fill="#333333" stroke="#ffffff" stroke-width="0.5" textLength="35.9" lengthAdjust="spacingAndGlyphs">155</text><text x="1738.0" y="933.7" font-size="22.5" font-weight="400" fill="#333333" stroke="#90ee90" stroke-width="0.5" textLength="106.3" lengthAdjust="spacingAndGlyphs">En Proceso</text><text x="15.3" y="979.7" font-size="22.5" font-weight="400" fill="#333333" stroke="#ffffff" stroke-width="0.5" textLength="72.8" lengthAdjust="spacingAndGlyphs">242901</text><text x="225.5" y="979.7" font-size="22.5" font-weight="400" fill="#333333" stroke="#ffffff" stroke-width="0.5" textLength="23.3" lengthAdjust="spacingAndGlyphs">11</text><text x="261.0" y="979.7" font-size="22.5" font-weight="400" fill="#333333" stroke="#ffffff" stroke-width="0.35" textLength="338.5" lengthAdjust="spacingAndGlyphs">DESAYUNADOR GRANDE ONTARIO</text><text x="648.6" y="979.7" font-size="22.5" font-weight="400" fill="#333333" stroke="#ffffff" stroke-width="0.35" textLength="76.2" lengthAdjust="spacingAndGlyphs">COPPEL</text><text x="1007.7" y="979.7" font-size="22.5" font-weight="400" fill="#333333" stroke="#ffffff" stroke-width="0.5" textLength="60.3" lengthAdjust="spacingAndGlyphs">P-A57</text><text x="1126.2" y="979.7" font-size="22.5" font-weight="400" fill="#333333" stroke="#ffffff" stroke-width="0.5" textLength="113.0" lengthAdjust="spacingAndGlyphs">31/07/2024</text><text x="1350.7" y="979.7" font-size="22.5" font-weight="400" fill="#333333" stroke="#ffffff" stroke-width="0.5" textLength="113.0" lengthAdjust="spacingAndGlyphs">31/07/2024</text><text x="1534.0" y="979.7" font-size="22.5" font-weight="400" fill="#333333" stroke="#ffffff" stroke-width="0.5" textLength="79.9" lengthAdjust="spacingAndGlyphs">12.0000</text><text x="1688.6" y="979.7" font-size="22.5" font-weight="400" fill="#333333" stroke="#ffffff" stroke-width="0.5" textLength="35.9" lengthAdjust="spacingAndGlyphs">155</text><text x="1738.0" y="979.7" font-size="22.5" font-weight="400" fill="#333333" stroke="#90ee90" stroke-width="0.5" textLength="106.3" lengthAdjust="spacingAndGlyphs">En Proceso</text><text x="15.3" y="1025.7" font-size="22.5" font-weight="400" fill="#333333" stroke="#ffffff" stroke-width="0.5" textLength="72.8" lengthAdjust="spacingAndGlyphs">242901</text><text x="223.8" y="1025.7" font-size="22.5" font-weight="400" fill="#333333" stroke="#ffffff" stroke-width="0.5" textLength="25.0" lengthAdjust="spacingAndGlyphs">12</text><text x="261.0" y="1025.7" font-size="22.5" font-weight="400" fill="#333333" stroke="#ffffff" stroke-width="0.35" textLength="325.5" lengthAdjust="spacingAndGlyphs">MESA PLEGABLE AZUL PATA AZUL</text><text x="648.6" y="1025.7" font-size="22.5" font-weight="400" fill="#333333" stroke="#ffffff" stroke-width="0.35" textLength="76.2" lengthAdjust="spacingAndGlyphs">COPPEL</text><text x="1007.7" y="1025.7" font-size="22.5" font-weight="400" fill="#333333" stroke="#ffffff" stroke-width="0.5" textLength="60.3" lengthAdjust="spacingAndGlyphs">P-A57</text><text x="1126.2" y="1025.7" font-size="22.5" font-weight="400" fill="#333333" stroke="#ffffff" stroke-width="0.5" textLength="113.0" lengthAdjust="spacingAndGlyphs">31/07/2024</text><text x="1350.7" y="1025.7" font-size="22.5" font-weight="400" fill="#333333" stroke="#ffffff" stroke-width="0.5" textLength="113.0" lengthAdjust="spacingAndGlyphs">31/07/2024</text><text x="1534.0" y="1025.7" font-size="22.5" font-weight="400" fill="#333333" stroke="#ffffff" stroke-width="0.5" textLength="79.9" lengthAdjust="spacingAndGlyphs">12.0000</text><text x="1688.6" y="1025.7" font-size="22.5" font-weight="400" fill="#333333" stroke="#ffffff" stroke-width="0.5" textLength="35.9" lengthAdjust="spacingAndGlyphs">155</text><text x="1738.0" y="1025.7" font-size="22.5" font-weight="400" fill="#333333" stroke="#90ee90" stroke-width="0.5" textLength="106.3" lengthAdjust="spacingAndGlyphs">En Proceso</text><text x="15.3" y="1071.7" font-size="22.5" font-weight="400" fill="#333333" stroke="#ffffff" stroke-width="0.5" textLength="72.8" lengthAdjust="spacingAndGlyphs">242901</text><text x="223.8" y="1071.7" font-size="22.5" font-weight="400" fill="#333333" stroke="#ffffff" stroke-width="0.5" textLength="25.0" lengthAdjust="spacingAndGlyphs">13</text><text x="261.0" y="1071.7" font-size="22.5" font-weight="400" fill="#333333" stroke="#ffffff" stroke-width="0.35" textLength="325.5" lengthAdjust="spacingAndGlyphs">MESA PLEGABLE AZUL PATA AZUL</text><text x="648.6" y="1071.7" font-size="22.5" font-weight="400" fill="#333333" stroke="#ffffff" stroke-width="0.35" textLength="343.0" lengthAdjust="spacingAndGlyphs">BOTAS CULIACANAZO S.A. DE C.V.</text><text x="1007.7" y="1071.7" font-size="22.5" font-weight="400" fill="#333333" stroke="#ffffff" stroke-width="0.5" textLength="60.3" lengthAdjust="spacingAndGlyphs">P-A60</text><text x="1126.2" y="1071.7" font-size="22.5" font-weight="400" fill="#333333" stroke="#ffffff" stroke-width="0.5" textLength="113.0" lengthAdjust="spacingAndGlyphs">08/08/2024</text><text x="1350.7" y="1071.7" font-size="22.5" font-weight="400" fill="#333333" stroke="#ffffff" stroke-width="0.5" textLength="113.0" lengthAdjust="spacingAndGlyphs">08/08/2024</text><text x="1534.0" y="1071.7" font-size="22.5" font-weight="400" fill="#333333" stroke="#ffffff" stroke-width="0.5" textLength="79.9" lengthAdjust="spacingAndGlyphs">10.0000</text><text x="1688.6" y="1071.7" font-size="22.5" font-weight="400" fill="#333333" stroke="#ffffff" stroke-width="0.5" textLength="35.9" lengthAdjust="spacingAndGlyphs">147</text><text x="1738.0" y="1071.7" font-size="22.5" font-weight="400" fill="#333333" stroke="#90ee90" stroke-width="0.5" textLength="106.3" lengthAdjust="spacingAndGlyphs">En Proceso</text><text x="15.3" y="1117.7" font-size="22.5" font-weight="400" fill="#333333" stroke="#ffffff" stroke-width="0.5" textLength="72.8" lengthAdjust="spacingAndGlyphs">243001</text><text x="236.1" y="1117.7" font-size="22.5" font-weight="400" fill="#333333" stroke="#ffffff" stroke-width="0.5" textLength="12.7" lengthAdjust="spacingAndGlyphs">1</text><text x="261.0" y="1117.7" font-size="22.5" font-weight="400" fill="#333333" stroke="#ffffff" stroke-width="0.35" textLength="365.0" lengthAdjust="spacingAndGlyphs">ALACENA PRAGA CON PORTAGARR...</text><text x="648.6" y="1117.7" font-size="22.5" font-weight="400" fill="#333333" stroke="#ffffff" stroke-width="0.35" textLength="274.3" lengthAdjust="spacingAndGlyphs">MUEBLERIA ESPECIALIZADA</text><text x="1007.7" y="1117.7" font-size="22.5" font-weight="400" fill="#333333" stroke="#ffffff" stroke-width="0.5" textLength="60.3" lengthAdjust="spacingAndGlyphs">P-A58</text><text x="1126.2" y="1117.7" font-size="22.5" font-weight="400" fill="#333333" stroke="#ffffff" stroke-width="0.5" textLength="113.0" lengthAdjust="spacingAndGlyphs">31/07/2024</text><text x="1350.7" y="1117.7" font-size="22.5" font-weight="400" fill="#333333" stroke="#ffffff" stroke-width="0.5" textLength="113.0" lengthAdjust="spacingAndGlyphs">31/07/2024</text><text x="1545.2" y="1117.7" font-size="22.5" font-weight="400" fill="#333333" stroke="#ffffff" stroke-width="0.5" textLength="68.7" lengthAdjust="spacingAndGlyphs">3.0000</text><text x="1688.6" y="1117.7" font-size="22.5" font-weight="400" fill="#333333" stroke="#ffffff" stroke-width="0.5" textLength="35.9" lengthAdjust="spacingAndGlyphs">155</text><text x="1738.0" y="1117.7" font-size="22.5" font-weight="400" fill="#333333" stroke="#90ee90" stroke-width="0.5" textLength="106.3" lengthAdjust="spacingAndGlyphs">En Proceso</text><text x="15.3" y="1163.7" font-size="22.5" font-weight="400" fill="#333333" stroke="#ffffff" stroke-width="0.5" textLength="72.8" lengthAdjust="spacingAndGlyphs">243001</text><text x="235.1" y="1163.7" font-size="22.5" font-weight="400" fill="#333333" stroke="#ffffff" stroke-width="0.5" textLength="13.7" lengthAdjust="spacingAndGlyphs">3</text><text x="261.0" y="1163.7" font-size="22.5" font-weight="400" fill="#333333" stroke="#ffffff" stroke-width="0.35" textLength="365.0" lengthAdjust="spacingAndGlyphs">ALACENA PRAGA CON PORTAGARR...</text><text x="648.6" y="1163.7" font-size="22.5" font-weight="400" fill="#333333" stroke="#ffffff" stroke-width="0.35" textLength="76.2" lengthAdjust="spacingAndGlyphs">COPPEL</text><text x="1007.7" y="1163.7" font-size="22.5" font-weight="400" fill="#333333" stroke="#ffffff" stroke-width="0.5" textLength="60.3" lengthAdjust="spacingAndGlyphs">P-A59</text><text x="1126.2" y="1163.7" font-size="22.5" font-weight="400" fill="#333333" stroke="#ffffff" stroke-width="0.5" textLength="113.0" lengthAdjust="spacingAndGlyphs">31/07/2024</text><text x="1350.7" y="1163.7" font-size="22.5" font-weight="400" fill="#333333" stroke="#ffffff" stroke-width="0.5" textLength="113.0" lengthAdjust="spacingAndGlyphs">31/07/2024</text><text x="1546.2" y="1163.7" font-size="22.5" font-weight="400" fill="#333333" stroke="#ffffff" stroke-width="0.5" textLength="67.7" lengthAdjust="spacingAndGlyphs">1.0000</text><text x="1688.6" y="1163.7" font-size="22.5" font-weight="400" fill="#333333" stroke="#ffffff" stroke-width="0.5" textLength="35.9" lengthAdjust="spacingAndGlyphs">155</text><text x="1738.0" y="1163.7" font-size="22.5" font-weight="400" fill="#333333" stroke="#90ee90" stroke-width="0.5" textLength="106.3" lengthAdjust="spacingAndGlyphs">En Proceso</text><text x="15.3" y="1209.7" font-size="22.5" font-weight="400" fill="#333333" stroke="#ffffff" stroke-width="0.5" textLength="66.0" lengthAdjust="spacingAndGlyphs">M2437</text><text x="236.1" y="1209.7" font-size="22.5" font-weight="400" fill="#333333" stroke="#ffffff" stroke-width="0.5" textLength="12.7" lengthAdjust="spacingAndGlyphs">1</text><text x="261.0" y="1209.7" font-size="22.5" font-weight="400" fill="#333333" stroke="#ffffff" stroke-width="0.35" textLength="367.4" lengthAdjust="spacingAndGlyphs">HOME TOP IT 55 CM NEGRO- ETIQU...</text><text x="648.6" y="1209.7" font-size="22.5" font-weight="400" fill="#333333" stroke="#ffffff" stroke-width="0.35" textLength="274.3" lengthAdjust="spacingAndGlyphs">MUEBLERIA ESPECIALIZADA</text><text x="1007.7" y="1209.7" font-size="22.5" font-weight="400" fill="#333333" stroke="#ffffff" stroke-width="0.5" textLength="60.3" lengthAdjust="spacingAndGlyphs">P-A61</text><text x="1126.2" y="1209.7" font-size="22.5" font-weight="400" fill="#333333" stroke="#ffffff" stroke-width="0.5" textLength="112.0" lengthAdjust="spacingAndGlyphs">26/08/2024</text><text x="1350.7" y="1209.7" font-size="22.5" font-weight="400" fill="#333333" stroke="#ffffff" stroke-width="0.5" textLength="112.0" lengthAdjust="spacingAndGlyphs">26/08/2024</text><text x="1534.0" y="1209.7" font-size="22.5" font-weight="400" fill="#333333" stroke="#ffffff" stroke-width="0.5" textLength="79.9" lengthAdjust="spacingAndGlyphs">20.0000</text><text x="1688.6" y="1209.7" font-size="22.5" font-weight="400" fill="#333333" stroke="#ffffff" stroke-width="0.5" textLength="35.9" lengthAdjust="spacingAndGlyphs">129</text><text x="1738.0" y="1209.7" font-size="22.5" font-weight="400" fill="#333333" stroke="#90ee90" stroke-width="0.5" textLength="106.3" lengthAdjust="spacingAndGlyphs">En Proceso</text><text x="15.3" y="1255.7" font-size="22.5" font-weight="400" fill="#333333" stroke="#ffffff" stroke-width="0.5" textLength="66.0" lengthAdjust="spacingAndGlyphs">M2437</text><text x="236.1" y="1255.7" font-size="22.5" font-weight="400" fill="#333333" stroke="#ffffff" stroke-width="0.5" textLength="12.7" lengthAdjust="spacingAndGlyphs">2</text><text x="261.0" y="1255.7" font-size="22.5" font-weight="400" fill="#333333" stroke="#ffffff" stroke-width="0.35" textLength="367.4" lengthAdjust="spacingAndGlyphs">HOME TOP IT 55 CM NEGRO- ETIQU...</text><text x="648.6" y="1255.7" font-size="22.5" font-weight="400" fill="#333333" stroke="#ffffff" stroke-width="0.35" textLength="274.3" lengthAdjust="spacingAndGlyphs">MUEBLERIA ESPECIALIZADA</text><text x="1007.7" y="1255.7" font-size="22.5" font-weight="400" fill="#333333" stroke="#ffffff" stroke-width="0.5" textLength="60.3" lengthAdjust="spacingAndGlyphs">P-A61</text><text x="1126.2" y="1255.7" font-size="22.5" font-weight="400" fill="#333333" stroke="#ffffff" stroke-width="0.5" textLength="112.0" lengthAdjust="spacingAndGlyphs">26/08/2024</text><text x="1350.7" y="1255.7" font-size="22.5" font-weight="400" fill="#333333" stroke="#ffffff" stroke-width="0.5" textLength="112.0" lengthAdjust="spacingAndGlyphs">26/08/2024</text><text x="1534.0" y="1255.7" font-size="22.5" font-weight="400" fill="#333333" stroke="#ffffff" stroke-width="0.5" textLength="79.9" lengthAdjust="spacingAndGlyphs">20.0000</text><text x="1688.6" y="1255.7" font-size="22.5" font-weight="400" fill="#333333" stroke="#ffffff" stroke-width="0.5" textLength="35.9" lengthAdjust="spacingAndGlyphs">129</text><text x="1738.0" y="1255.7" font-size="22.5" font-weight="400" fill="#333333" stroke="#90ee90" stroke-width="0.5" textLength="106.3" lengthAdjust="spacingAndGlyphs">En Proceso</text><text x="15.3" y="1301.7" font-size="22.5" font-weight="400" fill="#333333" stroke="#ffffff" stroke-width="0.5" textLength="66.0" lengthAdjust="spacingAndGlyphs">M2437</text><text x="235.1" y="1301.7" font-size="22.5" font-weight="400" fill="#333333" stroke="#ffffff" stroke-width="0.5" textLength="13.7" lengthAdjust="spacingAndGlyphs">3</text><text x="261.0" y="1301.7" font-size="22.5" font-weight="400" fill="#333333" stroke="#ffffff" stroke-width="0.35" textLength="367.4" lengthAdjust="spacingAndGlyphs">HOME TOP IT 55 CM NEGRO- ETIQU...</text><text x="648.6" y="1301.7" font-size="22.5" font-weight="400" fill="#333333" stroke="#ffffff" stroke-width="0.35" textLength="274.3" lengthAdjust="spacingAndGlyphs">MUEBLERIA ESPECIALIZADA</text><text x="1007.7" y="1301.7" font-size="22.5" font-weight="400" fill="#333333" stroke="#ffffff" stroke-width="0.5" textLength="60.3" lengthAdjust="spacingAndGlyphs">P-A61</text><text x="1126.2" y="1301.7" font-size="22.5" font-weight="400" fill="#333333" stroke="#ffffff" stroke-width="0.5" textLength="112.0" lengthAdjust="spacingAndGlyphs">26/08/2024</text><text x="1350.7" y="1301.7" font-size="22.5" font-weight="400" fill="#333333" stroke="#ffffff" stroke-width="0.5" textLength="112.0" lengthAdjust="spacingAndGlyphs">26/08/2024</text><text x="1534.0" y="1301.7" font-size="22.5" font-weight="400" fill="#333333" stroke="#ffffff" stroke-width="0.5" textLength="79.9" lengthAdjust="spacingAndGlyphs">20.0000</text><text x="1688.6" y="1301.7" font-size="22.5" font-weight="400" fill="#333333" stroke="#ffffff" stroke-width="0.5" textLength="35.9" lengthAdjust="spacingAndGlyphs">129</text><text x="1738.0" y="1301.7" font-size="22.5" font-weight="400" fill="#333333" stroke="#90ee90" stroke-width="0.5" textLength="106.3" lengthAdjust="spacingAndGlyphs">En Proceso</text><text x="15.3" y="1347.7" font-size="22.5" font-weight="400" fill="#333333" stroke="#ffffff" stroke-width="0.5" textLength="66.0" lengthAdjust="spacingAndGlyphs">M2437</text><text x="235.1" y="1347.7" font-size="22.5" font-weight="400" fill="#333333" stroke="#ffffff" stroke-width="0.5" textLength="13.7" lengthAdjust="spacingAndGlyphs">4</text><text x="261.0" y="1347.7" font-size="22.5" font-weight="400" fill="#333333" stroke="#ffffff" stroke-width="0.35" textLength="367.4" lengthAdjust="spacingAndGlyphs">HOME TOP IT 55 CM NEGRO- ETIQU...</text><text x="648.6" y="1347.7" font-size="22.5" font-weight="400" fill="#333333" stroke="#ffffff" stroke-width="0.35" textLength="274.3" lengthAdjust="spacingAndGlyphs">MUEBLERIA ESPECIALIZADA</text><text x="1007.7" y="1347.7" font-size="22.5" font-weight="400" fill="#333333" stroke="#ffffff" stroke-width="0.5" textLength="60.3" lengthAdjust="spacingAndGlyphs">P-A61</text><text x="1126.2" y="1347.7" font-size="22.5" font-weight="400" fill="#333333" stroke="#ffffff" stroke-width="0.5" textLength="112.0" lengthAdjust="spacingAndGlyphs">26/08/2024</text><text x="1350.7" y="1347.7" font-size="22.5" font-weight="400" fill="#333333" stroke="#ffffff" stroke-width="0.5" textLength="112.0" lengthAdjust="spacingAndGlyphs">26/08/2024</text><text x="1534.0" y="1347.7" font-size="22.5" font-weight="400" fill="#333333" stroke="#ffffff" stroke-width="0.5" textLength="79.9" lengthAdjust="spacingAndGlyphs">20.0000</text><text x="1688.6" y="1347.7" font-size="22.5" font-weight="400" fill="#333333" stroke="#ffffff" stroke-width="0.5" textLength="35.9" lengthAdjust="spacingAndGlyphs">129</text><text x="1738.0" y="1347.7" font-size="22.5" font-weight="400" fill="#333333" stroke="#90ee90" stroke-width="0.5" textLength="106.3" lengthAdjust="spacingAndGlyphs">En Proceso</text><text x="15.3" y="1393.7" font-size="22.5" font-weight="400" fill="#333333" stroke="#ffffff" stroke-width="0.5" textLength="66.0" lengthAdjust="spacingAndGlyphs">M2437</text><text x="235.1" y="1393.7" font-size="22.5" font-weight="400" fill="#333333" stroke="#ffffff" stroke-width="0.5" textLength="13.7" lengthAdjust="spacingAndGlyphs">5</text><text x="261.0" y="1393.7" font-size="22.5" font-weight="400" fill="#333333" stroke="#ffffff" stroke-width="0.35" textLength="367.4" lengthAdjust="spacingAndGlyphs">HOME TOP IT 55 CM NEGRO- ETIQU...</text><text x="648.6" y="1393.7" font-size="22.5" font-weight="400" fill="#333333" stroke="#ffffff" stroke-width="0.35" textLength="274.3" lengthAdjust="spacingAndGlyphs">MUEBLERIA ESPECIALIZADA</text><text x="1007.7" y="1393.7" font-size="22.5" font-weight="400" fill="#333333" stroke="#ffffff" stroke-width="0.5" textLength="60.3" lengthAdjust="spacingAndGlyphs">P-A61</text><text x="1126.2" y="1393.7" font-size="22.5" font-weight="400" fill="#333333" stroke="#ffffff" stroke-width="0.5" textLength="112.0" lengthAdjust="spacingAndGlyphs">26/08/2024</text><text x="1350.7" y="1393.7" font-size="22.5" font-weight="400" fill="#333333" stroke="#ffffff" stroke-width="0.5" textLength="112.0" lengthAdjust="spacingAndGlyphs">26/08/2024</text><text x="1534.0" y="1393.7" font-size="22.5" font-weight="400" fill="#333333" stroke="#ffffff" stroke-width="0.5" textLength="79.9" lengthAdjust="spacingAndGlyphs">20.0000</text><text x="1688.6" y="1393.7" font-size="22.5" font-weight="400" fill="#333333" stroke="#ffffff" stroke-width="0.5" textLength="35.9" lengthAdjust="spacingAndGlyphs">129</text><text x="1738.0" y="1393.7" font-size="22.5" font-weight="400" fill="#333333" stroke="#90ee90" stroke-width="0.5" textLength="106.3" lengthAdjust="spacingAndGlyphs">En Proceso</text></g>
</svg>
</body></html>
